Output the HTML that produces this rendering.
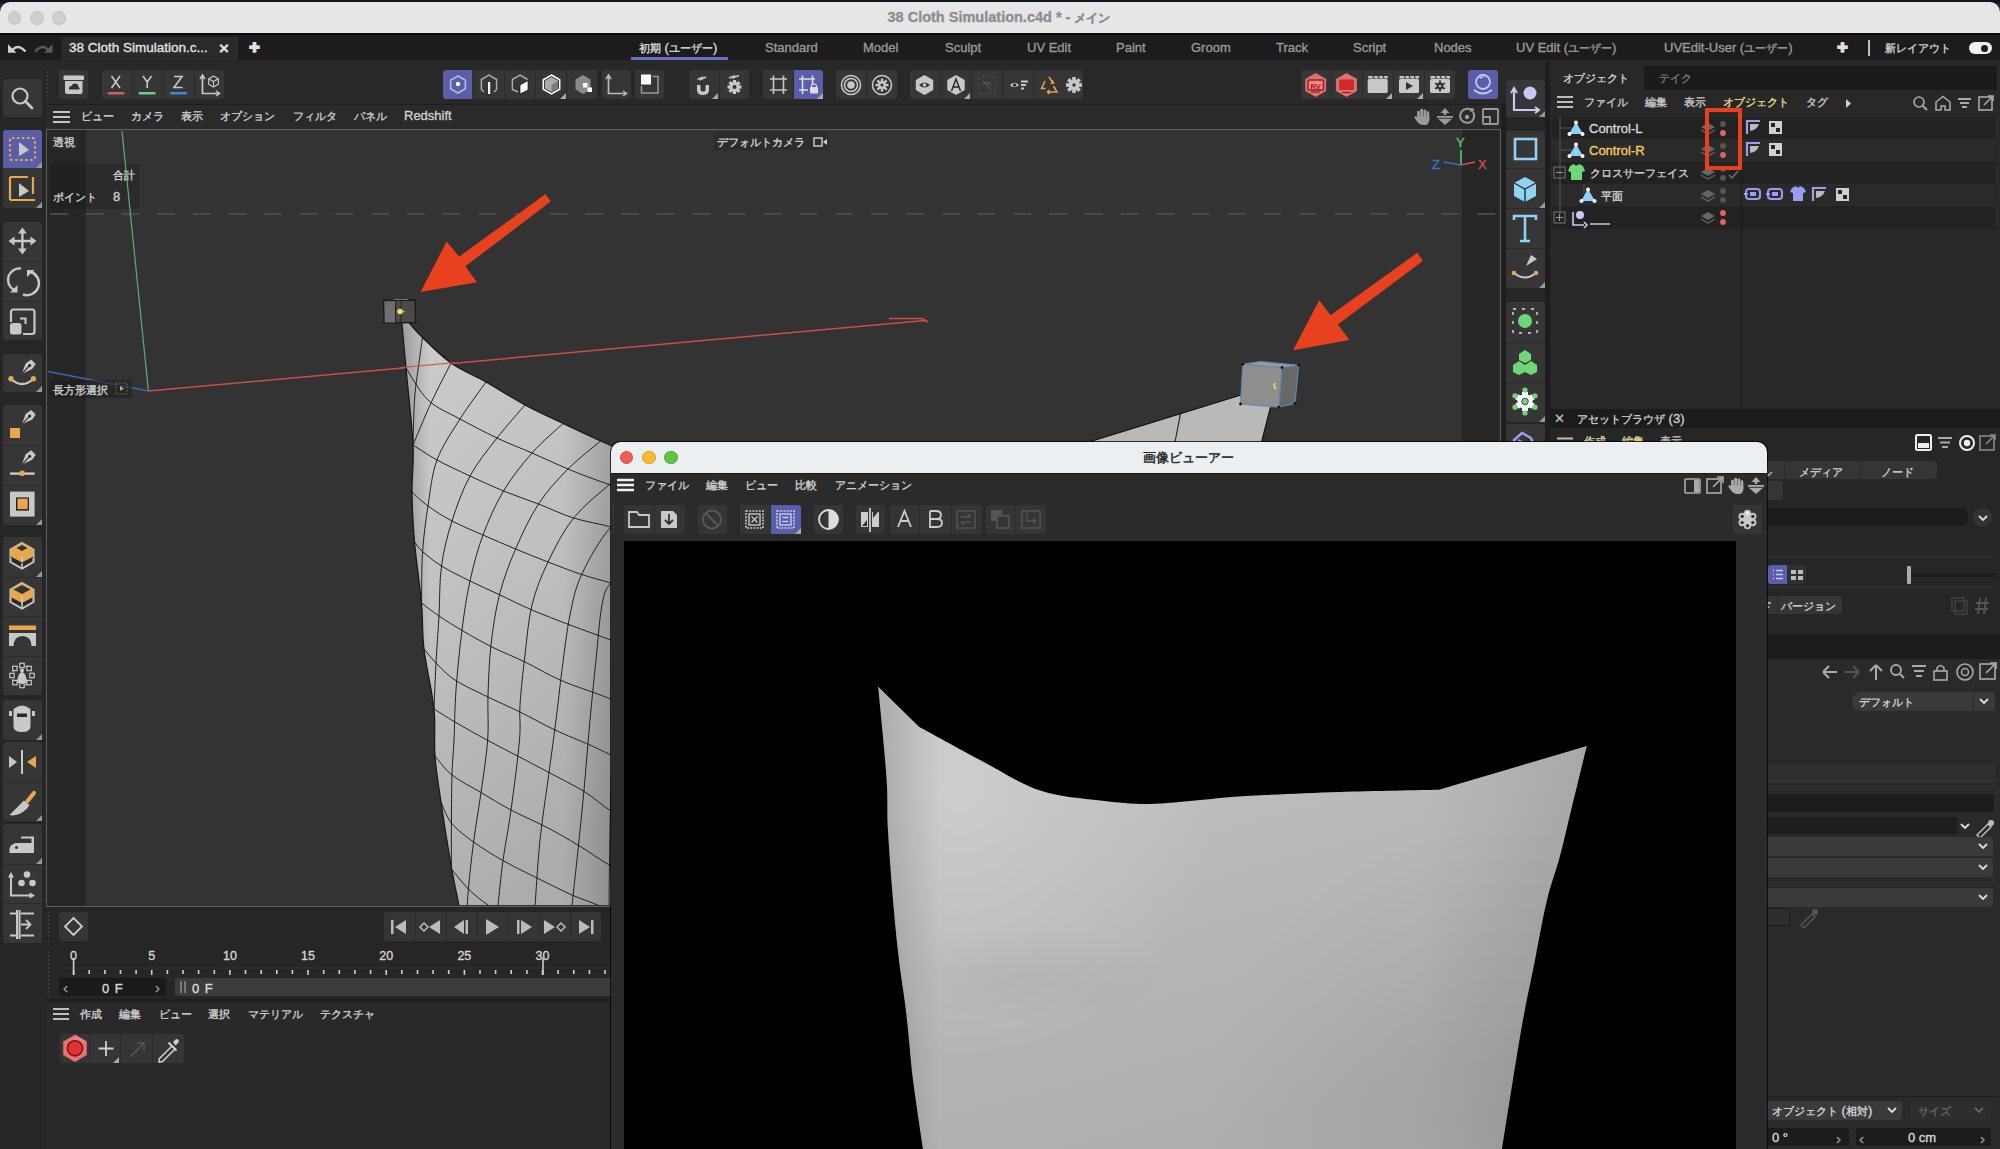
<!DOCTYPE html><html><head><meta charset="utf-8"><style>
*{margin:0;padding:0;box-sizing:border-box}
html,body{width:2000px;height:1149px;overflow:hidden;background:#262626;font-family:"Liberation Sans",sans-serif}
.a{position:absolute}
.t{position:absolute;white-space:nowrap;font-family:"Liberation Sans",sans-serif}
.btn{position:absolute;background:#353535}
svg{position:absolute;overflow:visible}
</style></head><body><div style="position:absolute;left:0px;top:0px;width:2000px;height:3px;background:#14141c;"></div><div style="position:absolute;left:0px;top:2px;width:2000px;height:32px;background:#e6e6e8;border-radius:10px 10px 0 0;"></div><div class="a" style="left:7.7px;top:11.2px;width:13.6px;height:13.6px;border-radius:50%;background:#cfcfd1;border:0.5px solid #c2c2c4"></div><div class="a" style="left:30.2px;top:11.2px;width:13.6px;height:13.6px;border-radius:50%;background:#cfcfd1;border:0.5px solid #c2c2c4"></div><div class="a" style="left:52.2px;top:11.2px;width:13.6px;height:13.6px;border-radius:50%;background:#cfcfd1;border:0.5px solid #c2c2c4"></div><div style="position:absolute;left:879px;top:8px;font-size:14.5px;line-height:18.5px;color:#8e8e90;font-weight:bold;white-space:nowrap;-webkit-text-stroke:0.35px #8e8e90;width:240px;text-align:center;letter-spacing:0px">38 Cloth Simulation.c4d * - <span style="font-size:12.18px">メイン</span></div><div style="position:absolute;left:0px;top:33px;width:2000px;height:2px;background:#0a0a0a;"></div><div style="position:absolute;left:0px;top:35px;width:2000px;height:25px;background:#1c1c1c;"></div><div style="position:absolute;left:61px;top:37px;width:177px;height:23px;background:#2a2a2a;"></div><svg style="left:0;top:0" width="80" height="60"><path d="M8 44.3 V52.8 H16.5Z" fill="#cfcfcf"/><path d="M12.5 49.8 Q18.5 43.5 25.5 51.5" stroke="#cfcfcf" stroke-width="2.4" fill="none"/><path d="M52.5 44.3 V52.8 H44Z" fill="#5a5a5a"/><path d="M48 49.8 Q42 43.5 35 51.5" stroke="#5a5a5a" stroke-width="2.4" fill="none"/></svg><div style="position:absolute;left:69px;top:39px;font-size:13.5px;line-height:17.5px;color:#e2e2e2;font-weight:normal;white-space:nowrap;-webkit-text-stroke:0.35px #e2e2e2;">38 Cloth Simulation.c...</div><div style="position:absolute;left:219px;top:38px;font-size:17px;line-height:21px;color:#e0e0e0;font-weight:bold;white-space:nowrap;-webkit-text-stroke:0.35px #e0e0e0;">×</div><div style="position:absolute;left:249px;top:40px;font-size:12.5px;line-height:16.5px;color:#e0e0e0;font-weight:bold;white-space:nowrap;-webkit-text-stroke:0.35px #e0e0e0;">✚</div><div style="position:absolute;left:639px;top:39px;font-size:13px;line-height:17px;color:#dadada;font-weight:normal;white-space:nowrap;-webkit-text-stroke:0.35px #dadada;"><span style="font-size:10.92px">初期</span> (<span style="font-size:10.92px">ユーザー</span>)</div><div style="position:absolute;left:765px;top:39px;font-size:13px;line-height:17px;color:#9a9a9a;font-weight:normal;white-space:nowrap;-webkit-text-stroke:0.35px #9a9a9a;">Standard</div><div style="position:absolute;left:863px;top:39px;font-size:13px;line-height:17px;color:#9a9a9a;font-weight:normal;white-space:nowrap;-webkit-text-stroke:0.35px #9a9a9a;">Model</div><div style="position:absolute;left:945px;top:39px;font-size:13px;line-height:17px;color:#9a9a9a;font-weight:normal;white-space:nowrap;-webkit-text-stroke:0.35px #9a9a9a;">Sculpt</div><div style="position:absolute;left:1027px;top:39px;font-size:13px;line-height:17px;color:#9a9a9a;font-weight:normal;white-space:nowrap;-webkit-text-stroke:0.35px #9a9a9a;">UV Edit</div><div style="position:absolute;left:1116px;top:39px;font-size:13px;line-height:17px;color:#9a9a9a;font-weight:normal;white-space:nowrap;-webkit-text-stroke:0.35px #9a9a9a;">Paint</div><div style="position:absolute;left:1191px;top:39px;font-size:13px;line-height:17px;color:#9a9a9a;font-weight:normal;white-space:nowrap;-webkit-text-stroke:0.35px #9a9a9a;">Groom</div><div style="position:absolute;left:1276px;top:39px;font-size:13px;line-height:17px;color:#9a9a9a;font-weight:normal;white-space:nowrap;-webkit-text-stroke:0.35px #9a9a9a;">Track</div><div style="position:absolute;left:1353px;top:39px;font-size:13px;line-height:17px;color:#9a9a9a;font-weight:normal;white-space:nowrap;-webkit-text-stroke:0.35px #9a9a9a;">Script</div><div style="position:absolute;left:1434px;top:39px;font-size:13px;line-height:17px;color:#9a9a9a;font-weight:normal;white-space:nowrap;-webkit-text-stroke:0.35px #9a9a9a;">Nodes</div><div style="position:absolute;left:1516px;top:39px;font-size:13px;line-height:17px;color:#9a9a9a;font-weight:normal;white-space:nowrap;-webkit-text-stroke:0.35px #9a9a9a;">UV Edit (<span style="font-size:10.92px">ユーザー</span>)</div><div style="position:absolute;left:1664px;top:39px;font-size:13px;line-height:17px;color:#9a9a9a;font-weight:normal;white-space:nowrap;-webkit-text-stroke:0.35px #9a9a9a;">UVEdit-User (<span style="font-size:10.92px">ユーザー</span>)</div><div style="position:absolute;left:1885px;top:39px;font-size:13px;line-height:17px;color:#d0d0d0;font-weight:normal;white-space:nowrap;-webkit-text-stroke:0.35px #d0d0d0;"><span style="font-size:10.92px">新レイアウト</span></div><div style="position:absolute;left:631px;top:57px;width:97px;height:3px;background:#6a6ec4;"></div><div style="position:absolute;left:1837px;top:40px;font-size:12.5px;line-height:16.5px;color:#e0e0e0;font-weight:bold;white-space:nowrap;-webkit-text-stroke:0.35px #e0e0e0;">✚</div><div style="position:absolute;left:1868px;top:40px;width:2px;height:16px;background:#bdbdbd;"></div><div class="a" style="left:1969px;top:42px;width:23px;height:12px;border-radius:6px;background:#f0f0f0"></div><div class="a" style="left:1981px;top:45px;width:7px;height:7px;border-radius:50%;background:#1c1c1c"></div><div style="position:absolute;left:0px;top:60px;width:2000px;height:44px;background:#282828;"></div><div class="a" style="left:3px;top:66px;width:38px;height:2px;background-image:radial-gradient(#444 0.8px,transparent 0.9px);background-size:4px 2px"></div><div class="a" style="left:46px;top:70px;width:3px;height:30px;background-image:radial-gradient(#444 0.8px,transparent 0.9px);background-size:3px 4px"></div><div class="a" style="left:1508px;top:66px;width:38px;height:2px;background-image:radial-gradient(#444 0.8px,transparent 0.9px);background-size:4px 2px"></div><div style="position:absolute;left:59px;top:70px;width:29px;height:29px;background:#363636;border-radius:3px;"></div><div style="position:absolute;left:102px;top:70px;width:122px;height:29px;background:#363636;border-radius:3px;"></div><div style="position:absolute;left:443px;top:70px;width:154px;height:29px;background:#363636;border-radius:3px;"></div><div style="position:absolute;left:602px;top:70px;width:29px;height:29px;background:#363636;border-radius:3px;"></div><div style="position:absolute;left:635px;top:70px;width:29px;height:29px;background:#363636;border-radius:3px;"></div><div style="position:absolute;left:689px;top:70px;width:60px;height:29px;background:#363636;border-radius:3px;"></div><div style="position:absolute;left:763px;top:70px;width:60px;height:29px;background:#363636;border-radius:3px;"></div><div style="position:absolute;left:836px;top:70px;width:61px;height:29px;background:#363636;border-radius:3px;"></div><div style="position:absolute;left:910px;top:70px;width:173px;height:29px;background:#363636;border-radius:3px;"></div><div style="position:absolute;left:1301px;top:70px;width:154px;height:29px;background:#363636;border-radius:3px;"></div><div style="position:absolute;left:443px;top:70px;width:29px;height:29px;background:#5a5ea8;border-radius:3px 0 0 3px;"></div><div style="position:absolute;left:793px;top:70px;width:30px;height:29px;background:#5a5ea8;border-radius:0 3px 3px 0;"></div><div style="position:absolute;left:1468px;top:70px;width:30px;height:29px;background:#5a5ea8;border-radius:3px;"></div><div style="position:absolute;left:132px;top:70px;width:1px;height:29px;background:#2a2a2a;"></div><div style="position:absolute;left:163px;top:70px;width:1px;height:29px;background:#2a2a2a;"></div><div style="position:absolute;left:194px;top:70px;width:1px;height:29px;background:#2a2a2a;"></div><div style="position:absolute;left:473px;top:70px;width:1px;height:29px;background:#2a2a2a;"></div><div style="position:absolute;left:504px;top:70px;width:1px;height:29px;background:#2a2a2a;"></div><div style="position:absolute;left:535px;top:70px;width:1px;height:29px;background:#2a2a2a;"></div><div style="position:absolute;left:566px;top:70px;width:1px;height:29px;background:#2a2a2a;"></div><div style="position:absolute;left:719px;top:70px;width:1px;height:29px;background:#2a2a2a;"></div><div style="position:absolute;left:793px;top:70px;width:1px;height:29px;background:#2a2a2a;"></div><div style="position:absolute;left:866px;top:70px;width:1px;height:29px;background:#2a2a2a;"></div><div style="position:absolute;left:940px;top:70px;width:1px;height:29px;background:#2a2a2a;"></div><div style="position:absolute;left:971px;top:70px;width:1px;height:29px;background:#2a2a2a;"></div><div style="position:absolute;left:1002px;top:70px;width:1px;height:29px;background:#2a2a2a;"></div><div style="position:absolute;left:1033px;top:70px;width:1px;height:29px;background:#2a2a2a;"></div><div style="position:absolute;left:1331px;top:70px;width:1px;height:29px;background:#2a2a2a;"></div><div style="position:absolute;left:1362px;top:70px;width:1px;height:29px;background:#2a2a2a;"></div><div style="position:absolute;left:1393px;top:70px;width:1px;height:29px;background:#2a2a2a;"></div><div style="position:absolute;left:1424px;top:70px;width:1px;height:29px;background:#2a2a2a;"></div><svg style="left:0;top:0" width="2000" height="110"><rect x="63.5" y="75.5" width="20.5" height="4.5" rx="1" fill="#c8c8c8"/><path d="M65 81 H82.5 V92 Q82.5 94 80.5 94 H67 Q65 94 65 92Z" fill="#c8c8c8"/><path d="M69 89.5 Q68.5 86 71.5 86 Q72.5 83 75.5 83.5 Q78.5 84 78.5 87 Q80 87.5 79.5 89.5Z" fill="#333"/><path d="M111.5 76 L120 88 M120 76 L111.5 88" stroke="#c8c8c8" stroke-width="1.6"/><rect x="107.5" y="92" width="17" height="2.5" rx="1" fill="#d0605c"/><path d="M143 76 L147.2 82 L151.5 76 M147.2 82 V88" stroke="#c8c8c8" stroke-width="1.6" fill="none"/><rect x="138.7" y="92" width="17" height="2.5" rx="1" fill="#6fcf72"/><path d="M174 76.5 H182 L174 87.5 H182.5" stroke="#c8c8c8" stroke-width="1.6" fill="none"/><rect x="170" y="92" width="17" height="2.5" rx="1" fill="#3f87d8"/><path d="M202.5 76 V93.5 H219" stroke="#c8c8c8" stroke-width="1.7" fill="none"/><path d="M200 79 L202.5 75 L205 79 M216 91 L219.5 93.5 L216 96" stroke="#c8c8c8" stroke-width="1.5" fill="none"/><polygon points="213.5,76.0 218.3,78.8 218.3,84.2 213.5,87.0 208.7,84.2 208.7,78.8" stroke="#c8c8c8" stroke-width="1.2" fill="none"/><path d="M208.7 78.7 L213.5 81.5 L218.3 78.7 M213.5 81.5 V87" stroke="#c8c8c8" stroke-width="1.1" fill="none"/><polygon points="458.0,76.0 465.4,80.2 465.4,88.8 458.0,93.0 450.6,88.8 450.6,80.2" stroke="#b8b8e0" stroke-width="1.6" fill="none"/><circle cx="458" cy="84" r="2.2" fill="#fff"/><path d="M484 92 L481.4 89.5 V79.5 L489 75 L496.6 79.5 V89.5 L494 92" stroke="#aaa" stroke-width="1.5" fill="none"/><rect x="488" y="82" width="2.2" height="12" fill="#fff"/><path d="M518 92 L512.4 89.5 V79.5 L520 75 L527.6 79.5" stroke="#aaa" stroke-width="1.5" fill="none"/><path d="M520 85 L528 80.5 V90 L520 94Z" fill="#fff" stroke="#111" stroke-width="0.7"/><polygon points="551.5,75.0 559.7,79.8 559.7,89.2 551.5,94.0 543.3,89.2 543.3,79.8" stroke="#fff" stroke-width="1.5" fill="none"/><polygon points="551.5,77.0 558.0,80.8 558.0,88.2 551.5,92.0 545.0,88.2 545.0,80.8" fill="#aaa"/><path d="M551.5 85 L558 81 V89 L551.5 92.5Z" fill="#7a7a7a"/><path d="M583 75 L590.5 79.5 V89.5 L583 94 L575.5 89.5 V79.5Z" fill="#8a8a8a"/><rect x="583" y="83" width="4.5" height="4.5" fill="#fff"/><rect x="587.5" y="87.5" width="4.5" height="4.5" fill="#fff"/><path d="M608.5 76 V93.5 H626" stroke="#bbb" stroke-width="1.7" fill="none"/><path d="M606 79 L608.5 75 L611 79 M623 91 L626.5 93.5 L623 96" stroke="#bbb" stroke-width="1.5" fill="none"/><rect x="641" y="74.5" width="10" height="10" fill="#fff"/><path d="M652.5 76.5 H658 V93 H641.5 V86" stroke="#999" stroke-width="1.5" fill="none"/><path d="M697 85 V90 Q697 95 703 95 Q709 95 709 90 V85 H705.5 V90 Q705.5 91.5 703 91.5 Q700.5 91.5 700.5 90 V85Z" fill="#c8c8c8"/><path d="M697.5 79.5 L702 77.5 L701 79.5 L706 77" stroke="#c8c8c8" stroke-width="1.4" fill="none"/><circle cx="734.5" cy="87" r="5" fill="#c8c8c8"/><rect x="732.9" y="80.0" width="3.2" height="3.5" fill="#c8c8c8" transform="rotate(0 734.5 87)"/><rect x="732.9" y="80.0" width="3.2" height="3.5" fill="#c8c8c8" transform="rotate(45 734.5 87)"/><rect x="732.9" y="80.0" width="3.2" height="3.5" fill="#c8c8c8" transform="rotate(90 734.5 87)"/><rect x="732.9" y="80.0" width="3.2" height="3.5" fill="#c8c8c8" transform="rotate(135 734.5 87)"/><rect x="732.9" y="80.0" width="3.2" height="3.5" fill="#c8c8c8" transform="rotate(180 734.5 87)"/><rect x="732.9" y="80.0" width="3.2" height="3.5" fill="#c8c8c8" transform="rotate(225 734.5 87)"/><rect x="732.9" y="80.0" width="3.2" height="3.5" fill="#c8c8c8" transform="rotate(270 734.5 87)"/><rect x="732.9" y="80.0" width="3.2" height="3.5" fill="#c8c8c8" transform="rotate(315 734.5 87)"/><circle cx="734.5" cy="87" r="2" fill="#333"/><path d="M729 78 L734 76 L733 78 L739 75.5" stroke="#c8c8c8" stroke-width="1.4" fill="none"/><path d="M770 79 H787 M770 90 H787 M773.5 75.5 V94 M783.5 75.5 V94" stroke="#c8c8c8" stroke-width="1.6"/><path d="M799 79 H815 M799 90 H808 M802.5 75.5 V94 M812.5 75.5 V85" stroke="#ddd" stroke-width="1.6"/><rect x="810" y="87" width="8" height="6.5" rx="1" fill="#ddd"/><path d="M811.5 87 V85.5 Q814 82 816.5 85.5 V87" stroke="#ddd" stroke-width="1.2" fill="none"/><circle cx="851" cy="85" r="9.5" stroke="#c8c8c8" stroke-width="1.6" fill="none"/><circle cx="851" cy="85" r="6.5" stroke="#c8c8c8" stroke-width="1.5" fill="none"/><circle cx="851" cy="85" r="3.8" fill="#c8c8c8"/><circle cx="882" cy="85" r="9.5" stroke="#c8c8c8" stroke-width="1.6" fill="none"/><circle cx="882" cy="85" r="4" fill="#c8c8c8"/><rect x="880.8" y="78.5" width="2.4" height="3" fill="#c8c8c8" transform="rotate(0 882 85)"/><rect x="880.8" y="78.5" width="2.4" height="3" fill="#c8c8c8" transform="rotate(45 882 85)"/><rect x="880.8" y="78.5" width="2.4" height="3" fill="#c8c8c8" transform="rotate(90 882 85)"/><rect x="880.8" y="78.5" width="2.4" height="3" fill="#c8c8c8" transform="rotate(135 882 85)"/><rect x="880.8" y="78.5" width="2.4" height="3" fill="#c8c8c8" transform="rotate(180 882 85)"/><rect x="880.8" y="78.5" width="2.4" height="3" fill="#c8c8c8" transform="rotate(225 882 85)"/><rect x="880.8" y="78.5" width="2.4" height="3" fill="#c8c8c8" transform="rotate(270 882 85)"/><rect x="880.8" y="78.5" width="2.4" height="3" fill="#c8c8c8" transform="rotate(315 882 85)"/><circle cx="882" cy="85" r="1.6" fill="#333"/><polygon points="924.5,75.0 933.2,80.0 933.2,90.0 924.5,95.0 915.8,90.0 915.8,80.0" fill="#c8c8c8"/><path d="M919 85 Q924.5 80 930 85 Q924.5 90 919 85Z" fill="#333"/><circle cx="924.5" cy="85" r="1.8" fill="#c8c8c8"/><polygon points="956.0,75.0 964.7,80.0 964.7,90.0 956.0,95.0 947.3,90.0 947.3,80.0" fill="#c8c8c8"/><path d="M951.5 91 L956 79 L960.5 91 M953 87 H959" stroke="#222" stroke-width="1.4" fill="none"/><rect x="978.5" y="76.5" width="17" height="17" stroke="#555" stroke-width="1.3" fill="none" stroke-dasharray="1.3 3"/><path d="M982.5 85 Q987 80.5 991.5 85 M983 81 L991 89" stroke="#555" stroke-width="1.2" fill="none"/><path d="M1010 85 Q1014 80.5 1019 85 Q1014 89.5 1010 85Z" fill="#c8c8c8"/><circle cx="1014.5" cy="85" r="1.8" fill="#333"/><path d="M1021 81.5 H1028 M1021 85 H1026 M1021 88.5 H1024" stroke="#c8c8c8" stroke-width="1.8"/><path d="M1049 77 L1053 83 M1052 80.5 L1053.5 83 L1050.5 83.5 M1045 81 L1041.5 88.5 H1045.5 M1048 92 H1057 L1053.5 86 M1049.5 90 L1047.5 92 L1049.5 94" stroke="#e4a04a" stroke-width="1.6" fill="none"/><circle cx="1074" cy="85" r="5.5" fill="#c8c8c8"/><rect x="1072.2" y="77" width="3.6" height="3.8" fill="#c8c8c8" transform="rotate(0 1074 85)"/><rect x="1072.2" y="77" width="3.6" height="3.8" fill="#c8c8c8" transform="rotate(45 1074 85)"/><rect x="1072.2" y="77" width="3.6" height="3.8" fill="#c8c8c8" transform="rotate(90 1074 85)"/><rect x="1072.2" y="77" width="3.6" height="3.8" fill="#c8c8c8" transform="rotate(135 1074 85)"/><rect x="1072.2" y="77" width="3.6" height="3.8" fill="#c8c8c8" transform="rotate(180 1074 85)"/><rect x="1072.2" y="77" width="3.6" height="3.8" fill="#c8c8c8" transform="rotate(225 1074 85)"/><rect x="1072.2" y="77" width="3.6" height="3.8" fill="#c8c8c8" transform="rotate(270 1074 85)"/><rect x="1072.2" y="77" width="3.6" height="3.8" fill="#c8c8c8" transform="rotate(315 1074 85)"/><circle cx="1074" cy="85" r="1.7" fill="#333"/><polygon points="1315.7,73.0 1326.1,79.0 1326.1,91.0 1315.7,97.0 1305.3,91.0 1305.3,79.0" fill="#e07272"/><rect x="1308" y="80" width="15.5" height="10" rx="1" stroke="#a01818" stroke-width="1.4" fill="#e88"/><path d="M1311 92 H1320" stroke="#a01818" stroke-width="1.2"/><text x="1315.7" y="88.5" font-size="7.5" font-weight="bold" fill="#a01818" text-anchor="middle" font-family="Liberation Sans">RV</text><polygon points="1346.5,73.0 1356.9,79.0 1356.9,91.0 1346.5,97.0 1336.1,91.0 1336.1,79.0" fill="#e07272"/><rect x="1339" y="79.5" width="15" height="10.5" rx="1" fill="#d02a2a"/><path d="M1342 92.5 H1351" stroke="#a01818" stroke-width="1.2"/><rect x="1367.7" y="79" width="20" height="14" rx="1.5" fill="#c8c8c8"/><path d="M1368.2 76 H1387.7 V78.5 H1368.2Z" fill="#c8c8c8"/><path d="M1372.7 75.5 L1374.2 78.5 M1377.7 75.5 L1379.2 78.5 M1382.7 75.5 L1384.2 78.5" stroke="#333" stroke-width="1.1"/><rect x="1399" y="79" width="20" height="14" rx="1.5" fill="#c8c8c8"/><path d="M1399.5 76 H1419 V78.5 H1399.5Z" fill="#c8c8c8"/><path d="M1404 75.5 L1405.5 78.5 M1409 75.5 L1410.5 78.5 M1414 75.5 L1415.5 78.5" stroke="#333" stroke-width="1.1"/><path d="M1406 82 L1413 86 L1406 90Z" fill="#333"/><rect x="1430" y="79" width="20" height="14" rx="1.5" fill="#c8c8c8"/><path d="M1430.5 76 H1450 V78.5 H1430.5Z" fill="#c8c8c8"/><path d="M1435 75.5 L1436.5 78.5 M1440 75.5 L1441.5 78.5 M1445 75.5 L1446.5 78.5" stroke="#333" stroke-width="1.1"/><circle cx="1440" cy="86" r="3.4" fill="#333"/><rect x="1439" y="80.5" width="2" height="2.5" fill="#333" transform="rotate(0 1440 86)"/><rect x="1439" y="80.5" width="2" height="2.5" fill="#333" transform="rotate(60 1440 86)"/><rect x="1439" y="80.5" width="2" height="2.5" fill="#333" transform="rotate(120 1440 86)"/><rect x="1439" y="80.5" width="2" height="2.5" fill="#333" transform="rotate(180 1440 86)"/><rect x="1439" y="80.5" width="2" height="2.5" fill="#333" transform="rotate(240 1440 86)"/><rect x="1439" y="80.5" width="2" height="2.5" fill="#333" transform="rotate(300 1440 86)"/><circle cx="1440" cy="86" r="1.2" fill="#c8c8c8"/><circle cx="1483" cy="82" r="7" stroke="#c8c8f4" stroke-width="1.8" fill="none"/><path d="M1480 78.5 Q1481.5 77 1483.5 77" stroke="#c8c8f4" stroke-width="1.4" fill="none"/><path d="M1474 90 Q1483 97 1492 90" stroke="#c8c8f4" stroke-width="1.8" fill="none"/></svg><svg style="left:560px;top:93px" width="6" height="6"><path d="M6 0 L6 6 L0 6Z" fill="#aaa"/></svg><svg style="left:712px;top:93px" width="6" height="6"><path d="M6 0 L6 6 L0 6Z" fill="#aaa"/></svg><svg style="left:817px;top:93px" width="6" height="6"><path d="M6 0 L6 6 L0 6Z" fill="#aaa"/></svg><svg style="left:964px;top:93px" width="6" height="6"><path d="M6 0 L6 6 L0 6Z" fill="#aaa"/></svg><svg style="left:1386px;top:93px" width="6" height="6"><path d="M6 0 L6 6 L0 6Z" fill="#aaa"/></svg><svg style="left:1417px;top:93px" width="6" height="6"><path d="M6 0 L6 6 L0 6Z" fill="#aaa"/></svg><div style="position:absolute;left:3px;top:79px;width:39px;height:38px;background:#363636;border-radius:3px;"></div><div style="position:absolute;left:3px;top:130px;width:39px;height:78px;background:#363636;border-radius:3px;"></div><div style="position:absolute;left:3px;top:222px;width:39px;height:118px;background:#363636;border-radius:3px;"></div><div style="position:absolute;left:3px;top:354px;width:39px;height:38px;background:#363636;border-radius:3px;"></div><div style="position:absolute;left:3px;top:405px;width:39px;height:120px;background:#363636;border-radius:3px;"></div><div style="position:absolute;left:3px;top:537px;width:39px;height:158px;background:#363636;border-radius:3px;"></div><div style="position:absolute;left:3px;top:700px;width:39px;height:40px;background:#363636;border-radius:3px;"></div><div style="position:absolute;left:3px;top:742px;width:39px;height:79px;background:#363636;border-radius:3px;"></div><div style="position:absolute;left:3px;top:824px;width:39px;height:119px;background:#363636;border-radius:3px;"></div><div style="position:absolute;left:3px;top:130px;width:39px;height:38px;background:#5a5ea8;border-radius:3px 3px 0 0;"></div><div style="position:absolute;left:3px;top:261px;width:39px;height:1px;background:#2a2a2a;"></div><div style="position:absolute;left:3px;top:301px;width:39px;height:1px;background:#2a2a2a;"></div><div style="position:absolute;left:3px;top:445px;width:39px;height:1px;background:#2a2a2a;"></div><div style="position:absolute;left:3px;top:485px;width:39px;height:1px;background:#2a2a2a;"></div><div style="position:absolute;left:3px;top:577px;width:39px;height:1px;background:#2a2a2a;"></div><div style="position:absolute;left:3px;top:616px;width:39px;height:1px;background:#2a2a2a;"></div><div style="position:absolute;left:3px;top:656px;width:39px;height:1px;background:#2a2a2a;"></div><div style="position:absolute;left:3px;top:782px;width:39px;height:1px;background:#2a2a2a;"></div><div style="position:absolute;left:3px;top:864px;width:39px;height:1px;background:#2a2a2a;"></div><div style="position:absolute;left:3px;top:903px;width:39px;height:1px;background:#2a2a2a;"></div><svg style="left:36px;top:162px" width="6" height="6"><path d="M6 0 L6 6 L0 6Z" fill="#9a9a9a"/></svg><svg style="left:36px;top:202px" width="6" height="6"><path d="M6 0 L6 6 L0 6Z" fill="#9a9a9a"/></svg><svg style="left:36px;top:386px" width="6" height="6"><path d="M6 0 L6 6 L0 6Z" fill="#9a9a9a"/></svg><svg style="left:36px;top:519px" width="6" height="6"><path d="M6 0 L6 6 L0 6Z" fill="#9a9a9a"/></svg><svg style="left:36px;top:571px" width="6" height="6"><path d="M6 0 L6 6 L0 6Z" fill="#9a9a9a"/></svg><svg style="left:36px;top:734px" width="6" height="6"><path d="M6 0 L6 6 L0 6Z" fill="#9a9a9a"/></svg><svg style="left:36px;top:815px" width="6" height="6"><path d="M6 0 L6 6 L0 6Z" fill="#9a9a9a"/></svg><svg style="left:36px;top:858px" width="6" height="6"><path d="M6 0 L6 6 L0 6Z" fill="#9a9a9a"/></svg><svg style="left:0;top:0" width="50" height="960"><circle cx="20" cy="96" r="7.5" stroke="#c8c8c8" stroke-width="2.2" fill="none"/><path d="M25.5 101.5 L32 108" stroke="#c8c8c8" stroke-width="2.8" stroke-linecap="round"/><rect x="10" y="138" width="25" height="22" rx="2" stroke="#e8a64e" stroke-width="2.2" fill="none" stroke-dasharray="2.5 2.5"/><path d="M19 142 L29 150 L19 156Z" fill="#c8c8c8"/><path d="M10 177 H28 M10 200 H35 M10 177 V200 M33 177 V194" stroke="#e8a64e" stroke-width="2.2" fill="none"/><path d="M19 183 L29 191 L19 197Z" fill="#c8c8c8"/><path d="M22.4 231 V251 M12 241 H33" stroke="#c8c8c8" stroke-width="2.4"/><path d="M18 233.5 L22.4 227.5 L26.8 233.5Z M18 248.5 L22.4 254.5 L26.8 248.5Z M14.5 236.5 L8.5 241 L14.5 245.5Z M30.5 236.5 L36.5 241 L30.5 245.5Z" fill="#c8c8c8"/><path d="M21 268.5 A11.5 11.5 0 0 0 14 290" stroke="#c8c8c8" stroke-width="2.4" fill="none"/><path d="M10 292.5 L17.5 292.5 L17.5 285Z" fill="#c8c8c8"/><path d="M23 294.5 A11.5 11.5 0 0 0 31 272" stroke="#c8c8c8" stroke-width="2.4" fill="none"/><path d="M34.5 270 L27 270 L27 277Z" fill="#c8c8c8"/><path d="M11 322 V312 Q11 309.5 13.5 309.5 H32 Q34.5 309.5 34.5 312 V331.5 Q34.5 334 32 334 H23" stroke="#c8c8c8" stroke-width="2.2" fill="none"/><rect x="10" y="323" width="11.5" height="11.5" rx="2.5" fill="#c8c8c8"/><path d="M20 318.5 H25.5 V324" stroke="#c8c8c8" stroke-width="2" fill="none"/><path d="M11 379 Q22 389 33.5 379" stroke="#c8c8c8" stroke-width="2.2" fill="none"/><circle cx="11" cy="378.8" r="2.7" fill="#e8a64e"/><circle cx="33.4" cy="378.8" r="2.7" fill="#e8a64e"/><path d="M21.7 374 L25.7 363.5 L31.2 359.5 L35.7 364 L32.2 369Z" fill="#c8c8c8"/><path d="M22.2 373.5 L29.2 366" stroke="#222" stroke-width="1.1"/><circle cx="29.7" cy="365.5" r="1.5" fill="#222"/><rect x="10" y="428" width="10" height="10" fill="#e8a64e"/><path d="M21.7 424.6 L25.7 414.1 L31.2 410.1 L35.7 414.6 L32.2 419.6Z" fill="#c8c8c8"/><path d="M22.2 424.1 L29.2 416.6" stroke="#222" stroke-width="1.1"/><circle cx="29.7" cy="416.1" r="1.5" fill="#222"/><path d="M10 473.6 H34.6" stroke="#c8c8c8" stroke-width="2.4"/><circle cx="22.2" cy="473.3" r="2.8" fill="#e8a64e"/><path d="M21.7 464.8 L25.7 454.3 L31.2 450.3 L35.7 454.8 L32.2 459.8Z" fill="#c8c8c8"/><path d="M22.2 464.3 L29.2 456.8" stroke="#222" stroke-width="1.1"/><circle cx="29.7" cy="456.3" r="1.5" fill="#222"/><rect x="10" y="491.6" width="24.6" height="25" fill="#c8c8c8"/><rect x="16" y="497.4" width="13" height="13.2" fill="#222"/><rect x="17.4" y="498.6" width="10.3" height="10.5" fill="#e8a64e"/><path d="M22 543 L33.5 549.5 V562 L22 568.5 L10.5 562 V549.5Z" stroke="#c8c8c8" stroke-width="2" fill="#2a2a2a"/><path d="M10.5 549.5 L22 543 L33.5 549.5 V557 L22 563 L10.5 557Z" fill="#e8a64e"/><path d="M16.5 548 L22 545 L27.5 548 L22 551Z" fill="#333"/><path d="M22 556 V568" stroke="#c8c8c8" stroke-width="1.6"/><path d="M10.5 557 L22 563 L33.5 557" stroke="#222" stroke-width="1" fill="none"/><path d="M22 583 L33.5 589.5 V602 L22 608.5 L10.5 602 V589.5Z" stroke="#c8c8c8" stroke-width="2" fill="#2a2a2a"/><path d="M10.5 589.5 L22 583 L33.5 589.5 V597 L22 603 L10.5 597Z" fill="#e8a64e"/><path d="M13.5 589.5 L22 585 L30.5 589.5 L22 594Z" fill="#333"/><path d="M22 596 V608" stroke="#c8c8c8" stroke-width="1.6"/><rect x="9" y="625.5" width="27" height="4.5" fill="#e8a64e"/><path d="M9 633 H36 V646 H31.5 Q31 636 22.5 636 Q14 636 13.5 646 H9Z" fill="#c8c8c8"/><circle cx="22" cy="675.5" r="10" stroke="#c8c8c8" stroke-width="1.2" fill="none" stroke-dasharray="2.5 2.5"/><rect x="29.8" y="673.3" width="4.4" height="4.4" stroke="#c8c8c8" stroke-width="1.2" fill="#333"/><rect x="26.9" y="680.4" width="4.4" height="4.4" stroke="#c8c8c8" stroke-width="1.2" fill="#333"/><rect x="19.8" y="683.3" width="4.4" height="4.4" stroke="#c8c8c8" stroke-width="1.2" fill="#333"/><rect x="12.7" y="680.4" width="4.4" height="4.4" stroke="#c8c8c8" stroke-width="1.2" fill="#333"/><rect x="9.8" y="673.3" width="4.4" height="4.4" stroke="#c8c8c8" stroke-width="1.2" fill="#333"/><rect x="12.7" y="666.2" width="4.4" height="4.4" stroke="#c8c8c8" stroke-width="1.2" fill="#333"/><rect x="19.8" y="663.3" width="4.4" height="4.4" stroke="#c8c8c8" stroke-width="1.2" fill="#333"/><rect x="26.9" y="666.2" width="4.4" height="4.4" stroke="#c8c8c8" stroke-width="1.2" fill="#333"/><path d="M17 683 Q17.5 673 22 672 Q26.5 673 27 683Z" fill="#c8c8c8"/><circle cx="22" cy="670.5" r="2" fill="#c8c8c8"/><path d="M13.5 709 Q22 702 30.5 709 V726 Q30.5 732 22 732 Q13.5 732 13.5 726Z" fill="#c8c8c8"/><rect x="17" y="713.5" width="10" height="3.5" fill="#2a2a2a"/><rect x="9" y="711" width="3" height="5" fill="#c8c8c8"/><rect x="32" y="711" width="3" height="5" fill="#c8c8c8"/><path d="M22 750 V774" stroke="#c8c8c8" stroke-width="2"/><path d="M9 756 L17 762 L9 768Z" fill="#c8c8c8"/><path d="M36 756 L27 762 L36 768Z" fill="#e8a64e"/><path d="M9.5 815 L24 800.5 L29.5 805 L27 808.5 Q20 815.5 12 815.5Z" fill="#c8c8c8"/><path d="M27.5 801 L34 793" stroke="#e8a64e" stroke-width="4.2" stroke-linecap="round"/><path d="M9.5 853 V848.5 Q11 843 18 843 H31.5 V838.5 H21 V836.5 H34 V853Z" fill="#c8c8c8"/><circle cx="16.5" cy="847.5" r="1.5" fill="#333"/><path d="M11 874 V895.5 H33" stroke="#c8c8c8" stroke-width="2" fill="none"/><path d="M8 877.5 L11 872 L14 877.5Z M29.5 892.5 L35 895.5 L29.5 898.5Z" fill="#c8c8c8"/><circle cx="27" cy="874.5" r="3.3" fill="#c8c8c8"/><circle cx="21.5" cy="883" r="3.3" fill="#c8c8c8"/><circle cx="32.5" cy="883" r="3.3" fill="#c8c8c8"/><path d="M10 913.5 H16 M21 913.5 H34 M10 935.5 H16 M21 935.5 H34 M17 910 V939 M19.5 910 V939" stroke="#c8c8c8" stroke-width="2"/><path d="M21 924.5 H30 M26 920 L30.5 924.5 L26 929" stroke="#c8c8c8" stroke-width="1.8" fill="none"/></svg><div style="position:absolute;left:46px;top:104px;width:1455px;height:25px;background:#2a2a2a;"></div><div style="position:absolute;left:46px;top:104px;width:1455px;height:1px;background:#1e1e1e;"></div><svg style="left:0;top:0" width="80" height="130"><path d="M53 112 H70 M53 117 H70 M53 122 H70" stroke="#c4c4c4" stroke-width="2.2"/></svg><div style="position:absolute;left:81px;top:107px;font-size:13px;line-height:17px;color:#cfcfcf;font-weight:normal;white-space:nowrap;-webkit-text-stroke:0.35px #cfcfcf;"><span style="font-size:10.92px">ビュー</span></div><div style="position:absolute;left:131px;top:107px;font-size:13px;line-height:17px;color:#cfcfcf;font-weight:normal;white-space:nowrap;-webkit-text-stroke:0.35px #cfcfcf;"><span style="font-size:10.92px">カメラ</span></div><div style="position:absolute;left:181px;top:107px;font-size:13px;line-height:17px;color:#cfcfcf;font-weight:normal;white-space:nowrap;-webkit-text-stroke:0.35px #cfcfcf;"><span style="font-size:10.92px">表示</span></div><div style="position:absolute;left:220px;top:107px;font-size:13px;line-height:17px;color:#cfcfcf;font-weight:normal;white-space:nowrap;-webkit-text-stroke:0.35px #cfcfcf;"><span style="font-size:10.92px">オプション</span></div><div style="position:absolute;left:293px;top:107px;font-size:13px;line-height:17px;color:#cfcfcf;font-weight:normal;white-space:nowrap;-webkit-text-stroke:0.35px #cfcfcf;"><span style="font-size:10.92px">フィルタ</span></div><div style="position:absolute;left:354px;top:107px;font-size:13px;line-height:17px;color:#cfcfcf;font-weight:normal;white-space:nowrap;-webkit-text-stroke:0.35px #cfcfcf;"><span style="font-size:10.92px">パネル</span></div><div style="position:absolute;left:404px;top:107px;font-size:13px;line-height:17px;color:#cfcfcf;font-weight:normal;white-space:nowrap;-webkit-text-stroke:0.35px #cfcfcf;">Redshift</div><svg style="left:1410px;top:104px" width="92" height="25"><g transform="translate(4 4) scale(0.95)" fill="#9a9a9a"><rect x="3.2" y="3" width="3" height="10" rx="1.5"/><rect x="6.6" y="0.8" width="3" height="11" rx="1.5"/><rect x="10" y="1.5" width="3" height="11" rx="1.5"/><rect x="13.3" y="3.5" width="2.8" height="10" rx="1.4"/><path d="M3.2 9 H16.1 V12.5 Q16.1 18 10 18 Q6 18 3.5 14.5 L0.6 10.5 Q0 9.2 1.3 8.8 Q2.4 8.5 3.2 9.5Z"/></g><path d="M35 4 L39.5 9 H36.3 V11 H33.7 V9 H30.5Z" fill="#9a9a9a"/><rect x="27" y="12" width="16" height="1.8" fill="#9a9a9a"/><path d="M35 21 L42 14.8 H28Z" fill="#9a9a9a"/><path d="M61 6 A7 7 0 1 0 63 8" stroke="#9a9a9a" stroke-width="2" fill="none"/><circle cx="57" cy="13" r="2.2" fill="#9a9a9a"/><circle cx="62" cy="6" r="2" fill="#9a9a9a"/><rect x="73" y="5" width="15" height="15" stroke="#9a9a9a" stroke-width="1.8" fill="none" rx="1"/><path d="M73 13 H80 V20" stroke="#9a9a9a" stroke-width="1.8" fill="none"/></svg><div style="position:absolute;left:46px;top:129px;width:1455px;height:778px;background:#5f5f5f;"></div><div style="position:absolute;left:47px;top:130px;width:1453px;height:776px;background:#333333;"></div><div style="position:absolute;left:47px;top:130px;width:39px;height:776px;background:#262626;"></div><div style="position:absolute;left:1462px;top:130px;width:38px;height:776px;background:#262626;"></div><div class="a" style="left:50px;top:213px;width:1450px;height:2px;background-image:linear-gradient(90deg,#4a4a4a 18px,transparent 18px);background-size:35.7px 2px"></div><div style="position:absolute;left:50px;top:132px;width:28px;height:18px;background:#2a2a2a;border-radius:2px;"></div><div style="position:absolute;left:53px;top:133px;font-size:13px;line-height:17px;color:#d0d0d0;font-weight:normal;white-space:nowrap;-webkit-text-stroke:0.35px #d0d0d0;"><span style="font-size:10.92px">透視</span></div><div style="position:absolute;left:50px;top:164px;width:89px;height:45px;background:rgba(20,20,20,0.22);border-radius:2px;"></div><div style="position:absolute;left:113px;top:166px;font-size:13px;line-height:17px;color:#cfcfcf;font-weight:normal;white-space:nowrap;-webkit-text-stroke:0.35px #cfcfcf;"><span style="font-size:10.92px">合計</span></div><div style="position:absolute;left:53px;top:188px;font-size:13px;line-height:17px;color:#cfcfcf;font-weight:normal;white-space:nowrap;-webkit-text-stroke:0.35px #cfcfcf;"><span style="font-size:10.92px">ポイント</span></div><div style="position:absolute;left:113px;top:188px;font-size:13px;line-height:17px;color:#cfcfcf;font-weight:normal;white-space:nowrap;-webkit-text-stroke:0.35px #cfcfcf;">8</div><div style="position:absolute;left:714px;top:132px;width:115px;height:18px;background:#2c2c2c;border-radius:2px;"></div><div style="position:absolute;left:717px;top:133px;font-size:13px;line-height:17px;color:#d4d4d4;font-weight:normal;white-space:nowrap;-webkit-text-stroke:0.35px #d4d4d4;"><span style="font-size:10.92px">デフォルトカメラ</span></div><svg style="left:813px;top:135px" width="16" height="14"><rect x="1" y="3" width="8" height="8" stroke="#cfcfcf" stroke-width="1.4" fill="none"/><path d="M10 7 L14 4 V10Z" fill="#cfcfcf"/></svg><svg style="left:0;top:0" width="2000" height="1149"><defs><linearGradient id="clg" x1="0" y1="0" x2="0.35" y2="1"><stop offset="0" stop-color="#cdcdcd"/><stop offset="0.5" stop-color="#c0c0c0"/><stop offset="1" stop-color="#acacac"/></linearGradient><linearGradient id="clg2" x1="0" y1="0" x2="1" y2="0"><stop offset="0" stop-color="#000" stop-opacity="0.25"/><stop offset="0.12" stop-color="#000" stop-opacity="0"/><stop offset="0.68" stop-color="#000" stop-opacity="0"/><stop offset="0.87" stop-color="#000" stop-opacity="0.16"/><stop offset="1" stop-color="#000" stop-opacity="0.2"/></linearGradient><clipPath id="vpclip"><rect x="48" y="131" width="1452" height="774"/></clipPath><clipPath id="clothclip"><path id="clothp" d=""/></clipPath><clipPath id="clothclipL"><path d="M401.0 313.0 C404.3 316.8 412.7 327.7 421.0 336.0 C429.3 344.3 440.2 355.3 451.0 363.0 C461.8 370.7 473.7 375.0 486.0 382.0 C498.3 389.0 512.2 398.1 525.0 405.0 C537.8 411.9 550.4 417.5 563.0 423.5 C575.6 429.5 587.8 435.2 600.6 441.0 C613.4 446.8 633.4 455.2 640.0 458.0 L640 930 L462 930 462.0 930.0 C461.5 926.0 460.8 916.5 459.0 906.0 C457.2 895.5 454.4 884.3 451.4 867.0 C448.4 849.7 443.7 820.5 441.0 802.0 C438.3 783.5 436.2 771.5 435.0 756.0 C433.8 740.5 435.8 726.8 434.0 709.0 C432.2 691.2 426.1 666.7 424.0 649.0 C421.9 631.3 423.1 620.8 421.5 603.0 C419.9 585.2 416.1 560.5 414.5 542.0 C412.9 523.5 412.2 508.2 412.0 492.0 C411.8 475.8 414.0 465.7 413.0 445.0 C412.0 424.3 408.0 390.0 406.0 368.0 C404.0 346.0 401.8 322.2 401.0 313.0Z"/></clipPath></defs><path d="M148.4 391 L48 371.5" stroke="#3a66b8" stroke-width="1.3"/><path d="M148.4 391 L122 131" stroke="#5cb070" stroke-width="1.2"/><path d="M148.4 391 L925 320.5 M889 318.5 L922 318.5 L928 322" stroke="#c9504a" stroke-width="1.5" fill="none"/><g clip-path="url(#vpclip)"><path d="M401.0 313.0 C404.3 316.8 412.7 327.7 421.0 336.0 C429.3 344.3 440.2 355.3 451.0 363.0 C461.8 370.7 473.7 375.0 486.0 382.0 C498.3 389.0 512.2 398.1 525.0 405.0 C537.8 411.9 550.4 417.5 563.0 423.5 C575.6 429.5 587.8 435.2 600.6 441.0 C613.4 446.8 633.4 455.2 640.0 458.0 L640 930 L462 930 462.0 930.0 C461.5 926.0 460.8 916.5 459.0 906.0 C457.2 895.5 454.4 884.3 451.4 867.0 C448.4 849.7 443.7 820.5 441.0 802.0 C438.3 783.5 436.2 771.5 435.0 756.0 C433.8 740.5 435.8 726.8 434.0 709.0 C432.2 691.2 426.1 666.7 424.0 649.0 C421.9 631.3 423.1 620.8 421.5 603.0 C419.9 585.2 416.1 560.5 414.5 542.0 C412.9 523.5 412.2 508.2 412.0 492.0 C411.8 475.8 414.0 465.7 413.0 445.0 C412.0 424.3 408.0 390.0 406.0 368.0 C404.0 346.0 401.8 322.2 401.0 313.0Z" fill="url(#clg)"/><path d="M401.0 313.0 C404.3 316.8 412.7 327.7 421.0 336.0 C429.3 344.3 440.2 355.3 451.0 363.0 C461.8 370.7 473.7 375.0 486.0 382.0 C498.3 389.0 512.2 398.1 525.0 405.0 C537.8 411.9 550.4 417.5 563.0 423.5 C575.6 429.5 587.8 435.2 600.6 441.0 C613.4 446.8 633.4 455.2 640.0 458.0 L640 930 L462 930 462.0 930.0 C461.5 926.0 460.8 916.5 459.0 906.0 C457.2 895.5 454.4 884.3 451.4 867.0 C448.4 849.7 443.7 820.5 441.0 802.0 C438.3 783.5 436.2 771.5 435.0 756.0 C433.8 740.5 435.8 726.8 434.0 709.0 C432.2 691.2 426.1 666.7 424.0 649.0 C421.9 631.3 423.1 620.8 421.5 603.0 C419.9 585.2 416.1 560.5 414.5 542.0 C412.9 523.5 412.2 508.2 412.0 492.0 C411.8 475.8 414.0 465.7 413.0 445.0 C412.0 424.3 408.0 390.0 406.0 368.0 C404.0 346.0 401.8 322.2 401.0 313.0Z" fill="url(#clg2)"/><g clip-path="url(#clothclipL)" stroke="#1a1a1a" stroke-width="0.95" fill="none"><path d="M422.6 336.4 C421.8 342.0 419.4 359.4 418.0 370.0 C416.6 380.6 415.3 387.5 414.5 400.0 C413.7 412.5 413.2 437.5 413.0 445.0"/><path d="M451.0 363.0 C447.7 369.7 437.3 389.3 431.0 403.0 C424.7 416.7 416.0 438.0 413.0 445.0"/><path d="M486.0 382.0 C481.7 388.2 468.2 406.0 460.0 419.0 C451.8 432.0 442.3 445.5 437.0 460.0 C431.7 474.5 430.4 490.7 428.0 506.0 C425.6 521.3 423.7 535.4 422.6 551.6 C421.5 567.8 421.7 594.4 421.5 603.0"/><path d="M525.0 405.0 C520.3 410.5 506.2 426.2 497.0 438.0 C487.8 449.8 477.5 462.2 470.0 476.0 C462.5 489.8 456.8 506.0 452.0 521.0 C447.2 536.0 443.7 550.2 441.5 566.0 C439.3 581.8 439.9 599.8 439.0 616.0 C438.1 632.2 436.8 647.5 436.0 663.0 C435.2 678.5 434.3 701.3 434.0 709.0"/><path d="M563.0 423.5 C557.8 428.4 541.9 441.8 532.0 453.0 C522.1 464.2 511.7 477.3 503.5 491.0 C495.3 504.7 488.6 520.0 483.0 535.0 C477.4 550.0 473.5 565.2 470.0 581.0 C466.5 596.8 464.3 611.8 462.0 630.0 C459.7 648.2 457.3 671.7 456.0 690.0 C454.7 708.3 454.7 725.8 454.0 740.0 C453.3 754.2 452.4 761.2 452.0 775.0 C451.6 788.8 451.5 807.3 451.4 823.0 C451.3 838.7 451.4 861.3 451.4 869.0"/><path d="M600.6 441.0 C595.2 445.7 578.4 458.5 568.0 469.0 C557.6 479.5 547.2 490.7 538.5 504.0 C529.8 517.3 522.1 533.9 515.6 549.0 C509.1 564.1 503.6 578.7 499.5 594.7 C495.4 610.7 492.9 628.3 491.0 645.0 C489.1 661.7 488.6 679.2 488.0 695.0 C487.4 710.8 488.9 723.8 487.7 740.0 C486.5 756.2 483.4 775.5 481.0 792.5 C478.6 809.5 475.7 825.9 473.6 842.0 C471.5 858.1 469.7 874.3 468.4 889.0 C467.1 903.7 466.4 923.2 466.0 930.0"/><path d="M640.0 458.0 C635.2 462.2 622.1 473.0 611.0 483.0 C599.9 493.0 584.1 504.8 573.6 518.0 C563.1 531.2 554.9 547.5 548.0 562.0 C541.1 576.5 535.8 589.5 532.0 605.0 C528.2 620.5 527.0 638.3 525.0 655.0 C523.0 671.7 520.9 690.8 520.0 705.0 C519.1 719.2 521.0 722.5 519.5 740.0 C518.0 757.5 513.8 789.9 511.0 810.0 C508.2 830.1 505.2 844.6 503.0 860.6 C500.8 876.6 499.2 894.4 498.0 906.0 C496.8 917.6 496.3 926.0 496.0 930.0"/><path d="M650.0 500.0 C643.5 504.5 622.4 514.6 611.0 527.0 C599.6 539.4 588.5 559.8 581.7 574.5 C574.9 589.2 573.3 599.1 570.0 615.0 C566.7 630.9 564.3 652.5 562.0 670.0 C559.7 687.5 558.3 701.7 556.0 720.0 C553.7 738.3 550.7 760.0 548.0 780.0 C545.3 800.0 542.2 819.0 540.0 840.0 C537.8 861.0 536.2 891.0 535.0 906.0 C533.8 921.0 533.3 926.0 533.0 930.0"/><path d="M640.0 560.0 C635.2 563.8 617.3 575.5 611.0 583.0 C604.7 590.5 604.5 592.2 602.0 605.0 C599.5 617.8 598.0 640.8 596.0 660.0 C594.0 679.2 592.0 698.3 590.0 720.0 C588.0 741.7 586.0 768.3 584.0 790.0 C582.0 811.7 580.0 830.7 578.0 850.0 C576.0 869.3 573.3 892.7 572.0 906.0 C570.7 919.3 570.3 926.0 570.0 930.0"/><path d="M630.0 640.0 C627.5 650.0 618.0 680.0 615.0 700.0 C612.0 720.0 612.8 738.3 612.0 760.0 C611.2 781.7 610.5 805.7 610.0 830.0 C609.5 854.3 609.2 893.3 609.0 906.0"/><path d="M406.0 368.0 C409.7 373.3 419.0 391.5 428.0 400.0 C437.0 408.5 448.5 412.7 460.0 419.0 C471.5 425.3 485.0 432.3 497.0 438.0 C509.0 443.7 520.2 447.8 532.0 453.0 C543.8 458.2 556.6 464.2 568.0 469.0 C579.4 473.8 588.6 477.2 600.6 481.5 C612.6 485.8 633.4 492.8 640.0 495.0"/><path d="M413.0 445.0 C417.0 447.5 427.5 454.8 437.0 460.0 C446.5 465.2 458.9 470.8 470.0 476.0 C481.1 481.2 492.1 486.3 503.5 491.0 C514.9 495.7 526.8 499.5 538.5 504.0 C550.2 508.5 561.5 514.2 573.6 518.0 C585.7 521.8 599.9 523.8 611.0 527.0 C622.1 530.2 635.2 535.3 640.0 537.0"/><path d="M412.0 492.0 C414.7 494.3 421.3 501.2 428.0 506.0 C434.7 510.8 442.8 516.2 452.0 521.0 C461.2 525.8 472.4 530.3 483.0 535.0 C493.6 539.7 504.8 544.5 515.6 549.0 C526.4 553.5 537.0 557.8 548.0 562.0 C559.0 566.2 571.2 571.0 581.7 574.5 C592.2 578.0 601.3 580.1 611.0 583.0 C620.7 585.9 635.2 590.5 640.0 592.0"/><path d="M414.5 542.0 C415.9 543.6 418.1 547.6 422.6 551.6 C427.1 555.6 433.6 561.1 441.5 566.0 C449.4 570.9 460.3 576.2 470.0 581.0 C479.7 585.8 489.2 589.9 499.5 594.7 C509.8 599.5 520.2 605.0 532.0 610.0 C543.8 615.0 556.8 620.0 570.0 625.0 C583.2 630.0 599.3 635.8 611.0 640.0 C622.7 644.2 635.2 648.3 640.0 650.0"/><path d="M421.5 603.0 C424.4 605.2 432.1 611.3 439.0 616.0 C445.9 620.7 454.2 625.8 463.0 631.0 C471.8 636.2 481.7 641.8 492.0 647.0 C502.3 652.2 513.7 656.5 525.0 662.0 C536.3 667.5 548.3 674.8 560.0 680.0 C571.7 685.2 586.5 689.8 595.0 693.0 C603.5 696.2 603.5 696.2 611.0 699.0 C618.5 701.8 635.2 708.2 640.0 710.0"/><path d="M424.0 649.0 C426.0 651.3 430.8 657.8 436.0 663.0 C441.2 668.2 446.3 674.3 455.0 680.0 C463.7 685.7 477.2 691.7 488.0 697.0 C498.8 702.3 508.8 706.5 520.0 712.0 C531.2 717.5 543.3 724.5 555.0 730.0 C566.7 735.5 580.7 740.8 590.0 745.0 C599.3 749.2 602.7 751.2 611.0 755.0 C619.3 758.8 635.2 765.8 640.0 768.0"/><path d="M434.0 709.0 C437.5 711.2 446.2 716.8 455.0 722.0 C463.8 727.2 476.2 734.2 487.0 740.0 C497.8 745.8 509.3 751.7 519.5 757.0 C529.7 762.3 537.1 766.2 548.0 772.0 C558.9 777.8 574.5 785.5 585.0 792.0 C595.5 798.5 601.8 805.5 611.0 811.0 C620.2 816.5 635.2 822.7 640.0 825.0"/><path d="M435.0 756.0 C437.8 759.2 444.3 768.9 452.0 775.0 C459.7 781.1 471.2 786.7 481.0 792.5 C490.8 798.3 499.8 804.1 511.0 810.0 C522.2 815.9 536.8 822.2 548.0 828.0 C559.2 833.8 567.5 838.7 578.0 845.0 C588.5 851.3 600.7 860.2 611.0 866.0 C621.3 871.8 635.2 877.7 640.0 880.0"/><path d="M441.0 802.0 C442.7 805.5 446.0 816.3 451.4 823.0 C456.8 829.7 465.0 835.7 473.6 842.0 C482.2 848.3 492.8 854.8 503.0 860.6 C513.2 866.4 523.5 871.3 535.0 877.0 C546.5 882.7 561.2 890.2 572.0 895.0 C582.8 899.8 588.7 901.0 600.0 906.0 C611.3 911.0 633.3 921.8 640.0 925.0"/><path d="M451.4 869.0 C454.2 872.3 462.3 883.0 468.4 889.0 C474.5 895.0 481.1 900.2 488.0 905.0 C494.9 909.8 506.3 915.8 510.0 918.0"/></g><path d="M401.0 313.0 C404.3 316.8 412.7 327.7 421.0 336.0 C429.3 344.3 440.2 355.3 451.0 363.0 C461.8 370.7 473.7 375.0 486.0 382.0 C498.3 389.0 512.2 398.1 525.0 405.0 C537.8 411.9 550.4 417.5 563.0 423.5 C575.6 429.5 587.8 435.2 600.6 441.0 C613.4 446.8 633.4 455.2 640.0 458.0 L640 930 L462 930 462.0 930.0 C461.5 926.0 460.8 916.5 459.0 906.0 C457.2 895.5 454.4 884.3 451.4 867.0 C448.4 849.7 443.7 820.5 441.0 802.0 C438.3 783.5 436.2 771.5 435.0 756.0 C433.8 740.5 435.8 726.8 434.0 709.0 C432.2 691.2 426.1 666.7 424.0 649.0 C421.9 631.3 423.1 620.8 421.5 603.0 C419.9 585.2 416.1 560.5 414.5 542.0 C412.9 523.5 412.2 508.2 412.0 492.0 C411.8 475.8 414.0 465.7 413.0 445.0 C412.0 424.3 408.0 390.0 406.0 368.0 C404.0 346.0 401.8 322.2 401.0 313.0Z" fill="none" stroke="#151515" stroke-width="1.2"/><path d="M400 367.6 L455 362.6" stroke="#c9504a" stroke-width="1.3" opacity="0.85"/></g><path d="M1241 395 L1180 414 L1089 442 L1261.6 442 L1270.4 407.7 L1262 390Z" fill="#b9b9b9"/><path d="M1180.5 413.8 L1175 442" stroke="#1e1e1e" stroke-width="1.1"/><path d="M1241 395 L1089 442 M1270.4 407.7 L1261.6 442" stroke="#111" stroke-width="1.2"/><path d="M383.5 300.5 L415 300 L415.5 322.5 L384 323Z" fill="#4a4a4a" stroke="#1a1a1a" stroke-width="1.3"/><path d="M384.5 301.5 L395.5 301 L395.5 322.5 L385 322.5Z" fill="#6e6e6e"/><path d="M395.5 301 V323 M401 301 V322" stroke="#222" stroke-width="1"/><path d="M394 299.5 H408" stroke="#777" stroke-width="1"/><circle cx="400" cy="311.5" r="2.8" fill="#e8e84a"/><path d="M402 311 L405 312" stroke="#c8c040" stroke-width="1"/><path d="M1242.8 364.3 L1260 361.5 L1298.6 365.2 L1282 367.5Z" fill="#9a9a9a"/><path d="M1242.8 364.3 L1282 367.5 L1278.8 407.2 L1240.5 404Z" fill="#8e8e8e"/><path d="M1282 367.5 L1298.6 365.2 L1295 403.5 L1278.8 407.2Z" fill="#686868"/><path d="M1242.8 364.3 L1260 361.5 L1298.6 365.2 L1295 403.5 L1278.8 407.2 L1240.5 404Z M1282 367.5 L1278.8 407.2 M1242.8 364.3 L1282 367.5 L1298.6 365.2" stroke="#5a8cb8" stroke-width="1.1" fill="none"/><circle cx="1240.5" cy="404" r="1.4" fill="#111"/><circle cx="1278.8" cy="407.2" r="1.4" fill="#111"/><circle cx="1295" cy="403.5" r="1.4" fill="#111"/><circle cx="1282" cy="367.5" r="1.4" fill="#111"/><circle cx="1298.6" cy="365.2" r="1.4" fill="#111"/><circle cx="1242.8" cy="364.3" r="1.4" fill="#111"/><path d="M1275 383 Q1273 387 1276 389" stroke="#e8e84a" stroke-width="1.5" fill="none"/><path d="M545.5 193.9 L550.7 201.6 L465.4 266.3 L476.9 282.3 L420.6 292 L446.6 241.5 L459.2 256.6Z" fill="#e7411f"/><path d="M1417.3 252.8 L1422.8 261 L1337.9 324.4 L1349.4 340.1 L1293.1 350.2 L1319.2 300.3 L1330.5 315.3Z" fill="#e7411f"/><path d="M1461 165 V150" stroke="#5cc46e" stroke-width="1.6"/><path d="M1461 165 L1444 162" stroke="#3c6fc4" stroke-width="1.6"/><path d="M1461 165 L1475 162" stroke="#d0504a" stroke-width="1.6"/></svg><div style="position:absolute;left:1456px;top:134px;font-size:13px;line-height:17px;color:#5cc46e;font-weight:normal;white-space:nowrap;-webkit-text-stroke:0.35px #5cc46e;">Y</div><div style="position:absolute;left:1432px;top:156px;font-size:13px;line-height:17px;color:#3c6fc4;font-weight:normal;white-space:nowrap;-webkit-text-stroke:0.35px #3c6fc4;">Z</div><div style="position:absolute;left:1478px;top:156px;font-size:13px;line-height:17px;color:#d0504a;font-weight:normal;white-space:nowrap;-webkit-text-stroke:0.35px #d0504a;">X</div><div style="position:absolute;left:50px;top:380px;width:82px;height:18px;background:rgba(30,30,30,0.55);border-radius:2px;"></div><div style="position:absolute;left:53px;top:381px;font-size:13px;line-height:17px;color:#d0d0d0;font-weight:normal;white-space:nowrap;-webkit-text-stroke:0.35px #d0d0d0;"><span style="font-size:10.92px">長方形選択</span></div><svg style="left:115px;top:382px" width="14" height="14"><rect x="1" y="1" width="11" height="11" stroke="#8a6a3a" stroke-width="1" fill="none" stroke-dasharray="1.5 1.5"/><path d="M5 4 L9 6.5 L5 9Z" fill="#aaa"/></svg><div style="position:absolute;left:1501px;top:104px;width:5px;height:802px;background:#1e1e1e;"></div><div style="position:absolute;left:1545px;top:62px;width:5px;height:380px;background:#1e1e1e;"></div><div style="position:absolute;left:1506px;top:80px;width:39px;height:37px;background:#363636;border-radius:3px;"></div><div style="position:absolute;left:1506px;top:131px;width:39px;height:157px;background:#363636;border-radius:3px;"></div><div style="position:absolute;left:1506px;top:302px;width:39px;height:120px;background:#363636;border-radius:3px;"></div><div style="position:absolute;left:1506px;top:424px;width:39px;height:36px;background:#363636;border-radius:3px;"></div><div style="position:absolute;left:1506px;top:168px;width:39px;height:1px;background:#2a2a2a;"></div><div style="position:absolute;left:1506px;top:208px;width:39px;height:1px;background:#2a2a2a;"></div><div style="position:absolute;left:1506px;top:248px;width:39px;height:1px;background:#2a2a2a;"></div><div style="position:absolute;left:1506px;top:342px;width:39px;height:1px;background:#2a2a2a;"></div><div style="position:absolute;left:1506px;top:382px;width:39px;height:1px;background:#2a2a2a;"></div><svg style="left:0;top:0" width="2000" height="460"><path d="M1514 90 V110 H1538" stroke="#c8c8f4" stroke-width="2.2" fill="none"/><path d="M1511 93 L1514 88 L1517 93 M1535 107 L1539 110 L1535 113" stroke="#c8c8f4" stroke-width="2" fill="none"/><circle cx="1530" cy="93" r="6.5" fill="#c8c8f4"/><rect x="1515" y="139" width="21" height="20" stroke="#8fd3f4" stroke-width="2.6" fill="none"/><path d="M1525 177 L1536 183 V196 L1525 202 L1514 196 V183Z" fill="#8fd3f4"/><path d="M1514 183 L1525 189 L1536 183 M1525 189 V202" stroke="#2a2a2a" stroke-width="1.4" fill="none"/><path d="M1514 220 V216 H1536 V220 M1525 216 V241 M1520 241 H1530" stroke="#8fd3f4" stroke-width="2.6" fill="none"/><path d="M1514 273 Q1525 282 1536 273" stroke="#c8c8c8" stroke-width="2" fill="none"/><circle cx="1514" cy="273" r="2.3" fill="#e8a64e"/><circle cx="1536" cy="273" r="2.3" fill="#e8a64e"/><path d="M1526 266 L1531 255 L1537 259Z" fill="#c8c8c8"/><circle cx="1525" cy="321" r="7" fill="#6fd77a"/><rect x="1513" y="309" width="24" height="24" stroke="#ddd" stroke-width="1.4" fill="none" stroke-dasharray="3 6"/><path d="M1525 350 L1531 354 V360 L1525 363 L1519 360 V354Z M1519 361 L1525 365 V372 L1519 375 L1513 372 V365Z M1531 361 L1537 365 V372 L1531 375 L1525 372 V365Z" fill="#6fd77a"/><circle cx="1525" cy="401.5" r="7.5" fill="#fff"/><rect x="1522" y="392" width="6" height="5" fill="#fff" transform="rotate(0 1525 401.5)"/><rect x="1522" y="392" width="6" height="5" fill="#fff" transform="rotate(60 1525 401.5)"/><rect x="1522" y="392" width="6" height="5" fill="#fff" transform="rotate(120 1525 401.5)"/><rect x="1522" y="392" width="6" height="5" fill="#fff" transform="rotate(180 1525 401.5)"/><rect x="1522" y="392" width="6" height="5" fill="#fff" transform="rotate(240 1525 401.5)"/><rect x="1522" y="392" width="6" height="5" fill="#fff" transform="rotate(300 1525 401.5)"/><circle cx="1525" cy="401.5" r="3.3" fill="#6fd77a" stroke="#222" stroke-width="0.8"/><circle cx="1525.0" cy="390.0" r="2.6" fill="#6fd77a"/><circle cx="1535.0" cy="395.8" r="2.6" fill="#6fd77a"/><circle cx="1535.0" cy="407.2" r="2.6" fill="#6fd77a"/><circle cx="1525.0" cy="413.0" r="2.6" fill="#6fd77a"/><circle cx="1515.0" cy="407.2" r="2.6" fill="#6fd77a"/><circle cx="1515.0" cy="395.8" r="2.6" fill="#6fd77a"/><path d="M1514 455 V440 L1522 433 L1531 438 L1534 446" stroke="#a0a0f0" stroke-width="2.4" fill="none"/><path d="M1518 440 L1526 444" stroke="#a0a0f0" stroke-width="2"/></svg><svg style="left:1539px;top:111px" width="6" height="6"><path d="M6 0 L6 6 L0 6Z" fill="#9a9a9a"/></svg><svg style="left:1539px;top:202px" width="6" height="6"><path d="M6 0 L6 6 L0 6Z" fill="#9a9a9a"/></svg><svg style="left:1539px;top:282px" width="6" height="6"><path d="M6 0 L6 6 L0 6Z" fill="#9a9a9a"/></svg><svg style="left:1539px;top:416px" width="6" height="6"><path d="M6 0 L6 6 L0 6Z" fill="#9a9a9a"/></svg><div style="position:absolute;left:1550px;top:62px;width:450px;height:347px;background:#282828;"></div><div style="position:absolute;left:1550px;top:66px;width:447px;height:24px;background:#1b1b1b;"></div><div style="position:absolute;left:1550px;top:66px;width:94px;height:24px;background:#282828;"></div><div style="position:absolute;left:1563px;top:69px;font-size:13px;line-height:17px;color:#d2d2d2;font-weight:normal;white-space:nowrap;-webkit-text-stroke:0.35px #d2d2d2;"><span style="font-size:10.92px">オブジェクト</span></div><div style="position:absolute;left:1659px;top:69px;font-size:13px;line-height:17px;color:#777;font-weight:normal;white-space:nowrap;-webkit-text-stroke:0.35px #777;"><span style="font-size:10.92px">テイク</span></div><svg style="left:1556px;top:95px" width="20" height="16"><path d="M1 2 H17 M1 7 H17 M1 12 H17" stroke="#bdbdbd" stroke-width="2"/></svg><div style="position:absolute;left:1584px;top:93px;font-size:13px;line-height:17px;color:#c8c8c8;font-weight:normal;white-space:nowrap;-webkit-text-stroke:0.35px #c8c8c8;"><span style="font-size:10.92px">ファイル</span></div><div style="position:absolute;left:1645px;top:93px;font-size:13px;line-height:17px;color:#c8c8c8;font-weight:normal;white-space:nowrap;-webkit-text-stroke:0.35px #c8c8c8;"><span style="font-size:10.92px">編集</span></div><div style="position:absolute;left:1684px;top:93px;font-size:13px;line-height:17px;color:#c8c8c8;font-weight:normal;white-space:nowrap;-webkit-text-stroke:0.35px #c8c8c8;"><span style="font-size:10.92px">表示</span></div><div style="position:absolute;left:1723px;top:93px;font-size:13px;line-height:17px;color:#e7d98a;font-weight:normal;white-space:nowrap;-webkit-text-stroke:0.35px #e7d98a;"><span style="font-size:10.92px">オブジェクト</span></div><div style="position:absolute;left:1806px;top:93px;font-size:13px;line-height:17px;color:#c8c8c8;font-weight:normal;white-space:nowrap;-webkit-text-stroke:0.35px #c8c8c8;"><span style="font-size:10.92px">タグ</span></div><svg style="left:1840px;top:96px" width="160" height="16"><path d="M6 3 L11 7.5 L6 12Z" fill="#cfcfcf"/><circle cx="79" cy="6" r="5" stroke="#aaa" stroke-width="1.6" fill="none"/><path d="M83 10 L87 14" stroke="#aaa" stroke-width="1.8"/><path d="M96 14 V6 L103 0.5 L110 6 V14 H105 V10 H101 V14Z" stroke="#aaa" stroke-width="1.5" fill="none"/><path d="M118 3 H131 M120 7 H129 M122 11 H127" stroke="#aaa" stroke-width="1.8"/><rect x="139" y="1" width="13" height="13" stroke="#aaa" stroke-width="1.6" fill="none"/><path d="M144 9 L153 0 M148 0 H153 V5" stroke="#aaa" stroke-width="1.6" fill="none"/></svg><div style="position:absolute;left:1552px;top:117px;width:443px;height:23px;background:#222222;"></div><div style="position:absolute;left:1552px;top:139px;width:443px;height:23px;background:#2a2a2a;"></div><div style="position:absolute;left:1552px;top:162px;width:443px;height:23px;background:#222222;"></div><div style="position:absolute;left:1552px;top:184px;width:443px;height:23px;background:#2a2a2a;"></div><div style="position:absolute;left:1552px;top:206px;width:443px;height:23px;background:#222222;"></div><div style="position:absolute;left:1741px;top:117px;width:1px;height:291px;background:#1a1a1a;"></div><svg style="left:1550px;top:117px" width="450" height="120"><path d="M10 0 V98 M10 11 H22 M10 33 H22 M34 67 V77 H40" stroke="#555" stroke-width="1" fill="none"/><rect x="4" y="50" width="11" height="11" stroke="#777" stroke-width="1" fill="none"/><path d="M6 55.5 H13" stroke="#999" stroke-width="1"/><rect x="4" y="95" width="11" height="11" stroke="#777" stroke-width="1" fill="none"/><path d="M6 100.5 H13 M9.5 97 V104" stroke="#999" stroke-width="1"/></svg><svg style="left:0;top:0" width="2000" height="240"><path d="M1576 122 L1583 134 H1569Z" fill="#8ed1f4"/><circle cx="1576" cy="122.5" r="2" fill="#fff"/><circle cx="1569.5" cy="134" r="2" fill="#fff"/><circle cx="1582.5" cy="134" r="2" fill="#fff"/><path d="M1576 144 L1583 156 H1569Z" fill="#8ed1f4"/><circle cx="1576" cy="144.5" r="2" fill="#fff"/><circle cx="1569.5" cy="156" r="2" fill="#fff"/><circle cx="1582.5" cy="156" r="2" fill="#fff"/><path d="M1588 189 L1595 201 H1581Z" fill="#8ed1f4"/><circle cx="1588" cy="189.5" r="2" fill="#fff"/><circle cx="1581.5" cy="201" r="2" fill="#fff"/><circle cx="1594.5" cy="201" r="2" fill="#fff"/><path d="M1570 166 L1574 164 Q1576 167 1579 164 L1583 166 L1585 171 L1582 172 V180 H1571 V172 L1568 171Z" fill="#6fd77a"/><path d="M1573 212 V225 H1584 M1584 222 L1587 225 L1584 228" stroke="#c8c8f4" stroke-width="1.6" fill="none"/><circle cx="1580" cy="215" r="4" fill="#c8c8f4"/><path d="M1590 224 H1610" stroke="#ccc" stroke-width="1.5"/><path d="M1708 123 L1715 127 L1708 131 L1701 127Z" fill="#666"/><path d="M1701 130 L1708 134 L1715 130" stroke="#666" stroke-width="1.3" fill="none"/><circle cx="1723" cy="124" r="2.9" fill="#555"/><circle cx="1723" cy="133" r="2.9" fill="#e46262"/><path d="M1708 145 L1715 149 L1708 153 L1701 149Z" fill="#666"/><path d="M1701 152 L1708 156 L1715 152" stroke="#666" stroke-width="1.3" fill="none"/><circle cx="1723" cy="146" r="2.9" fill="#555"/><circle cx="1723" cy="155" r="2.9" fill="#e46262"/><path d="M1708 168 L1715 172 L1708 176 L1701 172Z" fill="#666"/><path d="M1701 175 L1708 179 L1715 175" stroke="#666" stroke-width="1.3" fill="none"/><circle cx="1723" cy="169" r="2.9" fill="#555"/><circle cx="1723" cy="178" r="2.9" fill="#555"/><path d="M1708 190 L1715 194 L1708 198 L1701 194Z" fill="#666"/><path d="M1701 197 L1708 201 L1715 197" stroke="#666" stroke-width="1.3" fill="none"/><circle cx="1723" cy="191" r="2.9" fill="#555"/><circle cx="1723" cy="200" r="2.9" fill="#555"/><path d="M1708 212 L1715 216 L1708 220 L1701 216Z" fill="#666"/><path d="M1701 219 L1708 223 L1715 219" stroke="#666" stroke-width="1.3" fill="none"/><circle cx="1723" cy="213" r="2.9" fill="#e46262"/><circle cx="1723" cy="222" r="2.9" fill="#e46262"/><path d="M1729 175 L1732 178 L1738 171" stroke="#777" stroke-width="1.3" fill="none"/><path d="M1747 134 V121 H1760" stroke="#9a9cf4" stroke-width="2.2" fill="none"/><path d="M1750 131 V124 H1759 Q1757 130 1750 131Z" fill="#bbb"/><rect x="1769" y="121" width="13" height="13" fill="#d0d0d0"/><rect x="1771" y="123" width="4" height="4" fill="#222"/><rect x="1776" y="128" width="4" height="4" fill="#222"/><path d="M1747 156 V143 H1760" stroke="#9a9cf4" stroke-width="2.2" fill="none"/><path d="M1750 153 V146 H1759 Q1757 152 1750 153Z" fill="#bbb"/><rect x="1769" y="143" width="13" height="13" fill="#d0d0d0"/><rect x="1771" y="145" width="4" height="4" fill="#222"/><rect x="1776" y="150" width="4" height="4" fill="#222"/><rect x="1746" y="189" width="14" height="10" rx="3" stroke="#9a9cf4" stroke-width="2" fill="none"/><rect x="1750" y="192" width="6" height="4" fill="#9a9cf4"/><path d="M1744 194 H1748" stroke="#9a9cf4" stroke-width="2"/><rect x="1768" y="189" width="14" height="10" rx="3" stroke="#9a9cf4" stroke-width="2" fill="none"/><rect x="1772" y="192" width="6" height="4" fill="#9a9cf4"/><path d="M1766 194 H1770" stroke="#9a9cf4" stroke-width="2"/><path d="M1792 188 L1796 186 Q1798 189 1800 186 L1804 188 L1806 192 L1803 193 V201 H1793 V193 L1790 192Z" fill="#9a9cf4"/><path d="M1813 201 V188 H1826" stroke="#9a9cf4" stroke-width="2.2" fill="none"/><path d="M1816 198 V191 H1825 Q1823 197 1816 198Z" fill="#bbb"/><rect x="1836" y="188" width="13" height="13" fill="#d0d0d0"/><rect x="1838" y="190" width="4" height="4" fill="#222"/><rect x="1843" y="195" width="4" height="4" fill="#222"/></svg><div style="position:absolute;left:1589px;top:120px;font-size:13px;line-height:17px;color:#d8d8d8;font-weight:normal;white-space:nowrap;-webkit-text-stroke:0.35px #d8d8d8;">Control-L</div><div style="position:absolute;left:1589px;top:142px;font-size:13px;line-height:17px;color:#f0cc5a;font-weight:normal;white-space:nowrap;-webkit-text-stroke:0.35px #f0cc5a;">Control-R</div><div style="position:absolute;left:1590px;top:164px;font-size:13px;line-height:17px;color:#d0d0d0;font-weight:normal;white-space:nowrap;-webkit-text-stroke:0.35px #d0d0d0;"><span style="font-size:10.92px">クロスサーフェイス</span></div><div style="position:absolute;left:1601px;top:187px;font-size:13px;line-height:17px;color:#d0d0d0;font-weight:normal;white-space:nowrap;-webkit-text-stroke:0.35px #d0d0d0;"><span style="font-size:10.92px">平面</span></div><div class="a" style="left:1705px;top:108px;width:37px;height:62px;border:4.5px solid #e8401f"></div><div style="position:absolute;left:1550px;top:409px;width:450px;height:19px;background:#1c1c1c;"></div><div style="position:absolute;left:1554px;top:410px;font-size:13px;line-height:17px;color:#bbb;font-weight:normal;white-space:nowrap;-webkit-text-stroke:0.35px #bbb;">✕</div><div style="position:absolute;left:1577px;top:410px;font-size:13px;line-height:17px;color:#d0d0d0;font-weight:normal;white-space:nowrap;-webkit-text-stroke:0.35px #d0d0d0;"><span style="font-size:10.92px">アセットブラウザ</span> (3)</div><div style="position:absolute;left:1550px;top:428px;width:447px;height:206px;background:#262626;"></div><svg style="left:1556px;top:432px" width="20" height="16"><path d="M1 6.5 H17 M1 11.5 H17" stroke="#bdbdbd" stroke-width="2"/></svg><div style="position:absolute;left:1584px;top:432px;font-size:13px;line-height:17px;color:#d8d0a0;font-weight:normal;white-space:nowrap;-webkit-text-stroke:0.35px #d8d0a0;"><span style="font-size:10.92px">作成</span></div><div style="position:absolute;left:1622px;top:432px;font-size:13px;line-height:17px;color:#e7d98a;font-weight:normal;white-space:nowrap;-webkit-text-stroke:0.35px #e7d98a;"><span style="font-size:10.92px">編集</span></div><div style="position:absolute;left:1660px;top:432px;font-size:13px;line-height:17px;color:#c8c8c8;font-weight:normal;white-space:nowrap;-webkit-text-stroke:0.35px #c8c8c8;"><span style="font-size:10.92px">表示</span></div><svg style="left:1910px;top:434px" width="90" height="20"><rect x="6" y="1" width="15" height="15" stroke="#eee" stroke-width="2" fill="none" rx="1.5"/><rect x="8" y="9" width="11" height="5" fill="#eee"/><path d="M28 4 H42 M30 8.5 H40 M32 13 H38" stroke="#aaa" stroke-width="1.8"/><circle cx="57" cy="9" r="7" stroke="#eee" stroke-width="2" fill="none"/><circle cx="57" cy="9" r="3.2" fill="#eee"/><rect x="70" y="2" width="14" height="14" stroke="#888" stroke-width="1.6" fill="none"/><path d="M76 10 L85 1 M80 1 H85 V6" stroke="#888" stroke-width="1.6" fill="none"/></svg><div style="position:absolute;left:1700px;top:461px;width:237px;height:18px;background:#353535;border-radius:3px;"></div><div style="position:absolute;left:1860px;top:461px;width:1px;height:18px;background:#2a2a2a;"></div><div style="position:absolute;left:1784px;top:461px;width:1px;height:18px;background:#2a2a2a;"></div><div style="position:absolute;left:1761px;top:463px;font-size:13px;line-height:17px;color:#cfcfcf;font-weight:normal;white-space:nowrap;-webkit-text-stroke:0.35px #cfcfcf;"><span style="font-size:10.92px">ル</span></div><div style="position:absolute;left:1799px;top:463px;font-size:13px;line-height:17px;color:#cfcfcf;font-weight:normal;white-space:nowrap;-webkit-text-stroke:0.35px #cfcfcf;"><span style="font-size:10.92px">メディア</span></div><div style="position:absolute;left:1758px;top:480px;font-size:13px;line-height:17px;color:#cfcfcf;font-weight:normal;white-space:nowrap;-webkit-text-stroke:0.35px #cfcfcf;"><span style="font-size:10.92px">、</span></div><div style="position:absolute;left:1881px;top:463px;font-size:13px;line-height:17px;color:#cfcfcf;font-weight:normal;white-space:nowrap;-webkit-text-stroke:0.35px #cfcfcf;"><span style="font-size:10.92px">ノード</span></div><div style="position:absolute;left:1700px;top:481px;width:83px;height:19px;background:#353535;border-radius:0 0 3px 3px;"></div><div style="position:absolute;left:1700px;top:508px;width:268px;height:18px;background:#1c1c1c;border-radius:9px;"></div><div class="a" style="left:1973px;top:508px;width:19px;height:19px;border-radius:50%;background:#333"></div><svg style="left:1977px;top:513px" width="12" height="10"><path d="M2 3 L6 7 L10 3" stroke="#ddd" stroke-width="1.8" fill="none"/></svg><div style="position:absolute;left:1700px;top:556px;width:295px;height:1px;background:#333;"></div><div style="position:absolute;left:1768px;top:565px;width:38px;height:19px;background:#303030;border-radius:3px;"></div><div style="position:absolute;left:1768px;top:565px;width:19px;height:19px;background:#5a5ea8;border-radius:3px 0 0 3px;"></div><svg style="left:1768px;top:565px" width="40" height="20"><path d="M5 5.5 H6 M8 5.5 H15 M5 9.5 H6 M8 9.5 H15 M5 13.5 H6 M8 13.5 H15" stroke="#c8c8f4" stroke-width="1.6"/><rect x="23" y="5" width="5" height="4" fill="#bbb"/><rect x="30" y="5" width="5" height="4" fill="#bbb"/><rect x="23" y="11" width="5" height="4" fill="#bbb"/><rect x="30" y="11" width="5" height="4" fill="#bbb"/></svg><div style="position:absolute;left:1907px;top:566px;width:4px;height:18px;background:#aaa;border-radius:1px;"></div><div style="position:absolute;left:1911px;top:573px;width:84px;height:4px;background:#1c1c1c;border-radius:2px;"></div><div style="position:absolute;left:1700px;top:587px;width:295px;height:1px;background:#333;"></div><div style="position:absolute;left:1700px;top:596px;width:142px;height:18px;background:#353535;border-radius:3px;"></div><div style="position:absolute;left:1777px;top:596px;width:1px;height:18px;background:#2a2a2a;"></div><div style="position:absolute;left:1761px;top:597px;font-size:13px;line-height:17px;color:#cfcfcf;font-weight:normal;white-space:nowrap;-webkit-text-stroke:0.35px #cfcfcf;"><span style="font-size:10.92px">ド</span></div><div style="position:absolute;left:1781px;top:597px;font-size:13px;line-height:17px;color:#cfcfcf;font-weight:normal;white-space:nowrap;-webkit-text-stroke:0.35px #cfcfcf;"><span style="font-size:10.92px">バージョン</span></div><svg style="left:1950px;top:596px" width="50" height="20"><rect x="2" y="2" width="12" height="13" stroke="#444" stroke-width="1.4" fill="none"/><rect x="5" y="5" width="12" height="13" stroke="#444" stroke-width="1.4" fill="none"/><path d="M30 2 L28 18 M36 2 L34 18 M26 7 H39 M25 13 H38" stroke="#555" stroke-width="1.8"/></svg><div style="position:absolute;left:1550px;top:634px;width:450px;height:515px;background:#2a2a2a;"></div><div style="position:absolute;left:1550px;top:634px;width:450px;height:25px;background:#1c1c1c;"></div><svg style="left:1815px;top:662px" width="185" height="22"><path d="M8 10 H22 M8 10 L14 4 M8 10 L14 16" stroke="#aaa" stroke-width="2" fill="none"/><path d="M30 10 H44 M44 10 L38 4 M44 10 L38 16" stroke="#555" stroke-width="2" fill="none"/><path d="M61 18 V3 M61 3 L55 9 M61 3 L67 9" stroke="#aaa" stroke-width="2" fill="none"/><circle cx="81" cy="8" r="5" stroke="#aaa" stroke-width="1.8" fill="none"/><path d="M85 12 L89 16" stroke="#aaa" stroke-width="2"/><path d="M97 4 H111 M99 9 H109 M101 14 H107" stroke="#aaa" stroke-width="1.8"/><rect x="119" y="9" width="13" height="9" stroke="#aaa" stroke-width="1.6" fill="none"/><path d="M122 9 V6 Q125.5 1 129 6 V9" stroke="#aaa" stroke-width="1.6" fill="none"/><circle cx="150" cy="10" r="8" stroke="#aaa" stroke-width="1.6" fill="none"/><circle cx="150" cy="10" r="3.5" stroke="#aaa" stroke-width="1.5" fill="none"/><rect x="165" y="2" width="15" height="15" stroke="#aaa" stroke-width="1.6" fill="none"/><path d="M171 11 L181 1 M175 1 H181 V7" stroke="#aaa" stroke-width="1.6" fill="none"/></svg><div style="position:absolute;left:1852px;top:692px;width:143px;height:19px;background:#3a3a3a;border-radius:9px 3px 3px 9px;"></div><div style="position:absolute;left:1973px;top:692px;width:1px;height:19px;background:#2a2a2a;"></div><div style="position:absolute;left:1859px;top:693px;font-size:13px;line-height:17px;color:#d4d4d4;font-weight:normal;white-space:nowrap;-webkit-text-stroke:0.35px #d4d4d4;"><span style="font-size:10.92px">デフォルト</span></div><svg style="left:1978px;top:696px" width="14" height="10"><path d="M2 3 L6 7 L10 3" stroke="#ddd" stroke-width="1.8" fill="none"/></svg><div style="position:absolute;left:1700px;top:765px;width:295px;height:18px;background:#303030;"></div><div style="position:absolute;left:1700px;top:786px;width:295px;height:1px;background:#333;"></div><div style="position:absolute;left:1700px;top:794px;width:294px;height:18px;background:#1c1c1c;border-radius:3px;"></div><div style="position:absolute;left:1700px;top:817px;width:257px;height:17px;background:#1e1e1e;border-radius:3px;"></div><svg style="left:1958px;top:818px" width="42" height="20"><path d="M3 6 L7 10 L11 6" stroke="#ddd" stroke-width="1.8" fill="none"/><path d="M19 17 L30 6 L33 9 L22 20 Z" stroke="#bbb" stroke-width="1.5" fill="none"/><circle cx="33" cy="5" r="3" fill="#bbb"/></svg><div style="position:absolute;left:1700px;top:837px;width:293px;height:19px;background:#3a3a3a;border-radius:3px;"></div><svg style="left:1977px;top:842px" width="14" height="10"><path d="M2 2 L6 6 L10 2" stroke="#ddd" stroke-width="1.8" fill="none"/></svg><div style="position:absolute;left:1700px;top:858px;width:293px;height:19px;background:#3a3a3a;border-radius:3px;"></div><svg style="left:1977px;top:863px" width="14" height="10"><path d="M2 2 L6 6 L10 2" stroke="#ddd" stroke-width="1.8" fill="none"/></svg><div style="position:absolute;left:1700px;top:888px;width:293px;height:19px;background:#3a3a3a;border-radius:3px;"></div><svg style="left:1977px;top:893px" width="14" height="10"><path d="M2 2 L6 6 L10 2" stroke="#ddd" stroke-width="1.8" fill="none"/></svg><div style="position:absolute;left:1700px;top:882px;width:295px;height:1px;background:#333;"></div><div style="position:absolute;left:1700px;top:908px;width:90px;height:18px;background:#2e2e2e;border:1px solid #1c1c1c;"></div><svg style="left:1798px;top:906px" width="22" height="22"><path d="M3 19 L14 8 L17 11 L6 22 Z" stroke="#555" stroke-width="1.5" fill="none"/><circle cx="17" cy="6" r="3" fill="#555"/></svg><div style="position:absolute;left:1700px;top:1096px;width:297px;height:1px;background:#1c1c1c;"></div><div style="position:absolute;left:1700px;top:1101px;width:202px;height:19px;background:#3a3a3a;border-radius:3px;"></div><div style="position:absolute;left:1772px;top:1102px;font-size:13px;line-height:17px;color:#d4d4d4;font-weight:normal;white-space:nowrap;-webkit-text-stroke:0.35px #d4d4d4;"><span style="font-size:10.92px">オブジェクト</span> (<span style="font-size:10.92px">相対</span>)</div><svg style="left:1886px;top:1106px" width="14" height="10"><path d="M2 2 L6 6 L10 2" stroke="#ddd" stroke-width="1.8" fill="none"/></svg><div style="position:absolute;left:1910px;top:1101px;width:81px;height:19px;background:#2e2e2e;border-radius:3px;"></div><div style="position:absolute;left:1918px;top:1102px;font-size:13px;line-height:17px;color:#666;font-weight:normal;white-space:nowrap;-webkit-text-stroke:0.35px #666;"><span style="font-size:10.92px">サイズ</span></div><svg style="left:1973px;top:1106px" width="14" height="10"><path d="M2 2 L6 6 L10 2" stroke="#666" stroke-width="1.8" fill="none"/></svg><div style="position:absolute;left:1700px;top:1128px;width:149px;height:18px;background:#1c1c1c;border-radius:3px;"></div><div style="position:absolute;left:1772px;top:1129px;font-size:13px;line-height:17px;color:#d8d8d8;font-weight:normal;white-space:nowrap;-webkit-text-stroke:0.35px #d8d8d8;">0 °</div><div style="position:absolute;left:1836px;top:1129px;font-size:15px;line-height:19px;color:#999;font-weight:normal;white-space:nowrap;-webkit-text-stroke:0.35px #999;">›</div><div style="position:absolute;left:1856px;top:1128px;width:135px;height:18px;background:#1c1c1c;border-radius:3px;"></div><div style="position:absolute;left:1859px;top:1129px;font-size:15px;line-height:19px;color:#999;font-weight:normal;white-space:nowrap;-webkit-text-stroke:0.35px #999;">‹</div><div style="position:absolute;left:1908px;top:1129px;font-size:13px;line-height:17px;color:#d8d8d8;font-weight:normal;white-space:nowrap;-webkit-text-stroke:0.35px #d8d8d8;">0 cm</div><div style="position:absolute;left:1980px;top:1129px;font-size:15px;line-height:19px;color:#999;font-weight:normal;white-space:nowrap;-webkit-text-stroke:0.35px #999;">›</div><div style="position:absolute;left:46px;top:907px;width:566px;height:242px;background:#262626;"></div><div class="a" style="left:47px;top:910px;width:3px;height:32px;background-image:radial-gradient(#444 0.8px,transparent 0.9px);background-size:3px 4px"></div><div class="a" style="left:47px;top:950px;width:3px;height:46px;background-image:radial-gradient(#444 0.8px,transparent 0.9px);background-size:3px 4px"></div><div class="a" style="left:47px;top:1034px;width:3px;height:30px;background-image:radial-gradient(#444 0.8px,transparent 0.9px);background-size:3px 4px"></div><div style="position:absolute;left:59px;top:912px;width:29px;height:29px;background:#353535;border-radius:3px;"></div><svg style="left:59px;top:912px" width="29" height="29"><path d="M14.5 6 L23 14.5 L14.5 23 L6 14.5Z" stroke="#cfcfcf" stroke-width="1.8" fill="none"/></svg><div style="position:absolute;left:384px;top:912px;width:217px;height:29px;background:#353535;border-radius:3px;"></div><div style="position:absolute;left:415px;top:912px;width:1px;height:29px;background:#2c2c2c;"></div><div style="position:absolute;left:446px;top:912px;width:1px;height:29px;background:#2c2c2c;"></div><div style="position:absolute;left:477px;top:912px;width:1px;height:29px;background:#2c2c2c;"></div><div style="position:absolute;left:508px;top:912px;width:1px;height:29px;background:#2c2c2c;"></div><div style="position:absolute;left:539px;top:912px;width:1px;height:29px;background:#2c2c2c;"></div><div style="position:absolute;left:570px;top:912px;width:1px;height:29px;background:#2c2c2c;"></div><svg style="left:384px;top:912px" width="220" height="29"><rect x="7" y="8" width="2.5" height="14" fill="#bbb"/><path d="M22 8 L11 15 L22 22Z" fill="#bbb"/><path d="M36 15 L40 11 L44 15 L40 19Z" stroke="#bbb" stroke-width="1.5" fill="none"/><path d="M56 8 L45 15 L56 22Z" fill="#bbb"/><path d="M80 8 L70 15 L80 22Z" fill="#bbb"/><rect x="81.5" y="8" width="2.5" height="14" fill="#bbb"/><path d="M102 7 L115 15 L102 23Z" fill="#bbb"/><rect x="133" y="8" width="2.5" height="14" fill="#bbb"/><path d="M137 8 L148 15 L137 22Z" fill="#bbb"/><path d="M160 8 L171 15 L160 22Z" fill="#bbb"/><path d="M173 15 L177 11 L181 15 L177 19Z" stroke="#bbb" stroke-width="1.5" fill="none"/><path d="M195 8 L206 15 L195 22Z" fill="#bbb"/><rect x="207" y="8" width="2.5" height="14" fill="#bbb"/></svg><svg style="left:0;top:940px" width="612" height="40"><path d="M60 28 H612" stroke="#333" stroke-width="1"/><rect x="72.8" y="30" width="1.6" height="5" fill="#cfcfcf"/><rect x="88.4" y="30" width="1.6" height="4" fill="#cfcfcf"/><rect x="104.1" y="30" width="1.6" height="4" fill="#cfcfcf"/><rect x="119.7" y="30" width="1.6" height="4" fill="#cfcfcf"/><rect x="135.3" y="30" width="1.6" height="4" fill="#cfcfcf"/><rect x="150.9" y="30" width="1.6" height="5" fill="#cfcfcf"/><rect x="166.6" y="30" width="1.6" height="4" fill="#cfcfcf"/><rect x="182.2" y="30" width="1.6" height="4" fill="#cfcfcf"/><rect x="197.8" y="30" width="1.6" height="4" fill="#cfcfcf"/><rect x="213.5" y="30" width="1.6" height="4" fill="#cfcfcf"/><rect x="229.1" y="30" width="1.6" height="5" fill="#cfcfcf"/><rect x="244.7" y="30" width="1.6" height="4" fill="#cfcfcf"/><rect x="260.4" y="30" width="1.6" height="4" fill="#cfcfcf"/><rect x="276.0" y="30" width="1.6" height="4" fill="#cfcfcf"/><rect x="291.6" y="30" width="1.6" height="4" fill="#cfcfcf"/><rect x="307.2" y="30" width="1.6" height="5" fill="#cfcfcf"/><rect x="322.9" y="30" width="1.6" height="4" fill="#cfcfcf"/><rect x="338.5" y="30" width="1.6" height="4" fill="#cfcfcf"/><rect x="354.1" y="30" width="1.6" height="4" fill="#cfcfcf"/><rect x="369.8" y="30" width="1.6" height="4" fill="#cfcfcf"/><rect x="385.4" y="30" width="1.6" height="5" fill="#cfcfcf"/><rect x="401.0" y="30" width="1.6" height="4" fill="#cfcfcf"/><rect x="416.7" y="30" width="1.6" height="4" fill="#cfcfcf"/><rect x="432.3" y="30" width="1.6" height="4" fill="#cfcfcf"/><rect x="447.9" y="30" width="1.6" height="4" fill="#cfcfcf"/><rect x="463.6" y="30" width="1.6" height="5" fill="#cfcfcf"/><rect x="479.2" y="30" width="1.6" height="4" fill="#cfcfcf"/><rect x="494.8" y="30" width="1.6" height="4" fill="#cfcfcf"/><rect x="510.4" y="30" width="1.6" height="4" fill="#cfcfcf"/><rect x="526.1" y="30" width="1.6" height="4" fill="#cfcfcf"/><rect x="541.7" y="30" width="1.6" height="5" fill="#cfcfcf"/><rect x="557.3" y="30" width="1.6" height="4" fill="#cfcfcf"/><rect x="573.0" y="30" width="1.6" height="4" fill="#cfcfcf"/><rect x="588.6" y="30" width="1.6" height="4" fill="#cfcfcf"/><rect x="604.2" y="30" width="1.6" height="4" fill="#cfcfcf"/><rect x="72.8" y="18" width="1.6" height="17" fill="#cfcfcf"/><rect x="542.2" y="18" width="1.6" height="17" fill="#cfcfcf"/></svg><div style="position:absolute;left:53.599999999999994px;top:948px;font-size:12.5px;line-height:16.5px;color:#d4d4d4;font-weight:normal;white-space:nowrap;-webkit-text-stroke:0.35px #d4d4d4;width:40px;text-align:center;">0</div><div style="position:absolute;left:131.75px;top:948px;font-size:12.5px;line-height:16.5px;color:#d4d4d4;font-weight:normal;white-space:nowrap;-webkit-text-stroke:0.35px #d4d4d4;width:40px;text-align:center;">5</div><div style="position:absolute;left:209.9px;top:948px;font-size:12.5px;line-height:16.5px;color:#d4d4d4;font-weight:normal;white-space:nowrap;-webkit-text-stroke:0.35px #d4d4d4;width:40px;text-align:center;">10</div><div style="position:absolute;left:288.05px;top:948px;font-size:12.5px;line-height:16.5px;color:#d4d4d4;font-weight:normal;white-space:nowrap;-webkit-text-stroke:0.35px #d4d4d4;width:40px;text-align:center;">15</div><div style="position:absolute;left:366.20000000000005px;top:948px;font-size:12.5px;line-height:16.5px;color:#d4d4d4;font-weight:normal;white-space:nowrap;-webkit-text-stroke:0.35px #d4d4d4;width:40px;text-align:center;">20</div><div style="position:absolute;left:444.35px;top:948px;font-size:12.5px;line-height:16.5px;color:#d4d4d4;font-weight:normal;white-space:nowrap;-webkit-text-stroke:0.35px #d4d4d4;width:40px;text-align:center;">25</div><div style="position:absolute;left:522.5px;top:948px;font-size:12.5px;line-height:16.5px;color:#d4d4d4;font-weight:normal;white-space:nowrap;-webkit-text-stroke:0.35px #d4d4d4;width:40px;text-align:center;">30</div><div style="position:absolute;left:59px;top:978px;width:107px;height:18px;background:#1a1a1a;border-radius:3px;"></div><div style="position:absolute;left:63px;top:978px;font-size:15px;line-height:19px;color:#999;font-weight:normal;white-space:nowrap;-webkit-text-stroke:0.35px #999;">‹</div><div style="position:absolute;left:155px;top:978px;font-size:15px;line-height:19px;color:#999;font-weight:normal;white-space:nowrap;-webkit-text-stroke:0.35px #999;">›</div><div style="position:absolute;left:102px;top:980px;font-size:13px;line-height:17px;color:#dcdcdc;font-weight:normal;white-space:nowrap;-webkit-text-stroke:0.35px #dcdcdc;letter-spacing:1px;">0 F</div><div style="position:absolute;left:175px;top:978px;width:437px;height:18px;background:#3c3c3c;border-radius:3px 0 0 3px;"></div><div style="position:absolute;left:180px;top:981px;width:1.5px;height:12px;background:#777;"></div><div style="position:absolute;left:184px;top:981px;width:1.5px;height:12px;background:#777;"></div><div style="position:absolute;left:192px;top:980px;font-size:13px;line-height:17px;color:#dcdcdc;font-weight:normal;white-space:nowrap;-webkit-text-stroke:0.35px #dcdcdc;letter-spacing:1px;">0 F</div><div style="position:absolute;left:46px;top:999px;width:566px;height:3px;background:#1e1e1e;"></div><div style="position:absolute;left:46px;top:1002px;width:566px;height:147px;background:#292929;"></div><svg style="left:50px;top:1006px" width="22" height="16"><path d="M3 3 H19 M3 8 H19 M3 13 H19" stroke="#bdbdbd" stroke-width="2"/></svg><div style="position:absolute;left:80px;top:1005px;font-size:13px;line-height:17px;color:#cfcfcf;font-weight:normal;white-space:nowrap;-webkit-text-stroke:0.35px #cfcfcf;"><span style="font-size:10.92px">作成</span></div><div style="position:absolute;left:119px;top:1005px;font-size:13px;line-height:17px;color:#cfcfcf;font-weight:normal;white-space:nowrap;-webkit-text-stroke:0.35px #cfcfcf;"><span style="font-size:10.92px">編集</span></div><div style="position:absolute;left:159px;top:1005px;font-size:13px;line-height:17px;color:#cfcfcf;font-weight:normal;white-space:nowrap;-webkit-text-stroke:0.35px #cfcfcf;"><span style="font-size:10.92px">ビュー</span></div><div style="position:absolute;left:208px;top:1005px;font-size:13px;line-height:17px;color:#cfcfcf;font-weight:normal;white-space:nowrap;-webkit-text-stroke:0.35px #cfcfcf;"><span style="font-size:10.92px">選択</span></div><div style="position:absolute;left:248px;top:1005px;font-size:13px;line-height:17px;color:#cfcfcf;font-weight:normal;white-space:nowrap;-webkit-text-stroke:0.35px #cfcfcf;"><span style="font-size:10.92px">マテリアル</span></div><div style="position:absolute;left:320px;top:1005px;font-size:13px;line-height:17px;color:#cfcfcf;font-weight:normal;white-space:nowrap;-webkit-text-stroke:0.35px #cfcfcf;"><span style="font-size:10.92px">テクスチャ</span></div><div style="position:absolute;left:60px;top:1034px;width:124px;height:29px;background:#353535;border-radius:3px;"></div><div style="position:absolute;left:89px;top:1034px;width:1px;height:29px;background:#2c2c2c;"></div><div style="position:absolute;left:120px;top:1034px;width:1px;height:29px;background:#2c2c2c;"></div><div style="position:absolute;left:152px;top:1034px;width:1px;height:29px;background:#2c2c2c;"></div><svg style="left:60px;top:1034px" width="130" height="30"><polygon points="15.00,0.70 26.78,7.50 26.78,21.10 15.00,27.90 3.22,21.10 3.22,7.50" fill="#e27474"/><path d="M15 0.7 L26.8 7.5 L15 14.3Z" fill="#ec9090" opacity="0.5"/><circle cx="15" cy="14.3" r="7.6" fill="#e03434" stroke="#8a1010" stroke-width="1.6"/><path d="M46 7 V22 M38.5 14.5 H53.5" stroke="#cfcfcf" stroke-width="1.8"/><path d="M59 29 L59 23 L53 29Z" fill="#aaa"/><path d="M70 23 L84 9 M77 9 H84 V16" stroke="#555" stroke-width="1.5" fill="none"/><path d="M99.5 24.5 L112 12 L115 15 L102.5 27.5 L99 28Z" stroke="#cfcfcf" stroke-width="1.5" fill="none"/><path d="M108.5 8.5 L116.5 16.5" stroke="#cfcfcf" stroke-width="2"/><path d="M113 8 L115.5 5.5 Q117 4.5 118.5 6 Q119.5 7.5 118 9 L115.5 11.5Z" fill="#cfcfcf"/></svg><div class="a" style="left:611px;top:442px;width:1156px;height:707px;background:#2b2b2b;border-radius:10px 10px 0 0;overflow:hidden;box-shadow:0 0 0 1px rgba(0,0,0,0.75)"><div class="a" style="left:0;top:0;width:1156px;height:32px;background:#eceff1"></div></div><div style="position:absolute;left:611px;top:473px;width:1156px;height:1px;background:#1a1a1a;"></div><div class="a" style="left:620.0px;top:451.09999999999997px;width:13.2px;height:13.2px;border-radius:50%;background:#ee5e56;border:0.5px solid #d9473f"></div><div class="a" style="left:642.4px;top:451.09999999999997px;width:13.2px;height:13.2px;border-radius:50%;background:#f5bc2f;border:0.5px solid #dca024"></div><div class="a" style="left:664.4px;top:451.09999999999997px;width:13.2px;height:13.2px;border-radius:50%;background:#5fc53f;border:0.5px solid #47a92c"></div><div style="position:absolute;left:1088px;top:447px;font-size:15.5px;line-height:19.5px;color:#2a2a2a;font-weight:normal;white-space:nowrap;-webkit-text-stroke:0.35px #2a2a2a;width:200px;text-align:center;-webkit-text-stroke:0.5px #2a2a2a;"><span style="font-size:13.02px">画像ビューアー</span></div><svg style="left:615px;top:476px" width="24" height="20"><path d="M2 4 H19 M2 9 H19 M2 14 H19" stroke="#f2f2f2" stroke-width="2.6"/></svg><div style="position:absolute;left:645px;top:476px;font-size:13px;line-height:17px;color:#d0d0d0;font-weight:normal;white-space:nowrap;-webkit-text-stroke:0.35px #d0d0d0;"><span style="font-size:10.92px">ファイル</span></div><div style="position:absolute;left:706px;top:476px;font-size:13px;line-height:17px;color:#d0d0d0;font-weight:normal;white-space:nowrap;-webkit-text-stroke:0.35px #d0d0d0;"><span style="font-size:10.92px">編集</span></div><div style="position:absolute;left:745px;top:476px;font-size:13px;line-height:17px;color:#d0d0d0;font-weight:normal;white-space:nowrap;-webkit-text-stroke:0.35px #d0d0d0;"><span style="font-size:10.92px">ビュー</span></div><div style="position:absolute;left:795px;top:476px;font-size:13px;line-height:17px;color:#d0d0d0;font-weight:normal;white-space:nowrap;-webkit-text-stroke:0.35px #d0d0d0;"><span style="font-size:10.92px">比較</span></div><div style="position:absolute;left:835px;top:476px;font-size:13px;line-height:17px;color:#d0d0d0;font-weight:normal;white-space:nowrap;-webkit-text-stroke:0.35px #d0d0d0;"><span style="font-size:10.92px">アニメーション</span></div><svg style="left:1680px;top:476px" width="90" height="20"><rect x="5" y="3" width="15" height="14" stroke="#aaa" stroke-width="1.6" fill="none" rx="1"/><rect x="14" y="4" width="5" height="12" fill="#aaa"/><rect x="27" y="3" width="14" height="14" stroke="#aaa" stroke-width="1.6" fill="none"/><path d="M33 11 L43 1 M37 1 H43 V7" stroke="#aaa" stroke-width="1.6" fill="none"/><g transform="translate(48 1) scale(0.95)" fill="#aaa"><rect x="3.2" y="3" width="3" height="10" rx="1.5"/><rect x="6.6" y="0.8" width="3" height="11" rx="1.5"/><rect x="10" y="1.5" width="3" height="11" rx="1.5"/><rect x="13.3" y="3.5" width="2.8" height="10" rx="1.4"/><path d="M3.2 9 H16.1 V12.5 Q16.1 18 10 18 Q6 18 3.5 14.5 L0.6 10.5 Q0 9.2 1.3 8.8 Q2.4 8.5 3.2 9.5Z"/></g><path d="M76 1 L80.5 6 H77.3 V8 H74.7 V6 H71.5Z" fill="#aaa"/><rect x="68" y="9" width="16" height="1.8" fill="#aaa"/><path d="M76 18 L83 11.8 H69Z" fill="#aaa"/></svg><div class="a" style="left:612px;top:505px;width:4px;height:29px;background-image:radial-gradient(#444 0.8px,transparent 0.9px);background-size:3px 4px"></div><div style="position:absolute;left:624px;top:505px;width:61px;height:29px;background:#353535;border-radius:3px;"></div><div style="position:absolute;left:698px;top:505px;width:29px;height:29px;background:#353535;border-radius:3px;"></div><div style="position:absolute;left:740px;top:505px;width:61px;height:29px;background:#353535;border-radius:3px;"></div><div style="position:absolute;left:814px;top:505px;width:29px;height:29px;background:#353535;border-radius:3px;"></div><div style="position:absolute;left:856px;top:505px;width:29px;height:29px;background:#353535;border-radius:3px;"></div><div style="position:absolute;left:890px;top:505px;width:92px;height:29px;background:#353535;border-radius:3px;"></div><div style="position:absolute;left:986px;top:505px;width:60px;height:29px;background:#353535;border-radius:3px;"></div><div style="position:absolute;left:770px;top:505px;width:31px;height:29px;background:#5a5ea8;border-radius:0 3px 3px 0;"></div><div style="position:absolute;left:654px;top:505px;width:1px;height:29px;background:#2c2c2c;"></div><div style="position:absolute;left:770px;top:505px;width:1px;height:29px;background:#2c2c2c;"></div><div style="position:absolute;left:919px;top:505px;width:1px;height:29px;background:#2c2c2c;"></div><div style="position:absolute;left:951px;top:505px;width:1px;height:29px;background:#2c2c2c;"></div><div style="position:absolute;left:1015px;top:505px;width:1px;height:29px;background:#2c2c2c;"></div><svg style="left:0;top:0" width="2000" height="560"><path d="M629 512 H637 L639 515 H649 V527 H629Z" stroke="#c8c8c8" stroke-width="1.8" fill="none"/><path d="M661 511 H673 L677 515 V528 H661Z" fill="#c8c8c8"/><path d="M669 514 V524 M665 520 L669 524 L673 520" stroke="#333" stroke-width="1.8" fill="none"/><circle cx="712" cy="519.5" r="9" stroke="#5a5a5a" stroke-width="1.8" fill="none"/><path d="M706 513.5 L718 525.5" stroke="#5a5a5a" stroke-width="1.8"/><rect x="746" y="511" width="17" height="17" stroke="#c8c8c8" stroke-width="1.6" fill="none" stroke-dasharray="2 1.2"/><rect x="749" y="514" width="11" height="11" stroke="#c8c8c8" stroke-width="1.4" fill="none"/><path d="M751.5 516.5 L757.5 522.5 M757.5 516.5 L751.5 522.5" stroke="#c8c8c8" stroke-width="1.4"/><rect x="777" y="511" width="17" height="17" stroke="#c8c8f4" stroke-width="1.6" fill="none" stroke-dasharray="2 1.2"/><rect x="780" y="514" width="11" height="11" stroke="#c8c8f4" stroke-width="1.4" fill="none"/><path d="M782.5 517.5 H788.5 M782.5 521.5 H788.5" stroke="#c8c8f4" stroke-width="1.6"/><path d="M801 534 V528 L795 534Z" fill="#aaa"/><circle cx="828.5" cy="519.5" r="9.5" stroke="#ddd" stroke-width="1.8" fill="none"/><path d="M828.5 510 A9.5 9.5 0 0 1 828.5 529Z" fill="#ddd"/><path d="M870 508 V532" stroke="#ddd" stroke-width="1.6"/><path d="M861 512 H868 V527 H861Z M872 512 H879 V527 H872Z" fill="#ccc"/><path d="M862 526 L867 520 V526Z M878 512 L873 518 V512Z" fill="#333"/><path d="M898 527 L904.5 511 L911 527 M900.5 521 H908.5" stroke="#ccc" stroke-width="1.8" fill="none"/><path d="M930 511 H936 Q941 511 941 515 Q941 519 936 519 H930 M930 519 H937 Q942 519 942 523 Q942 527 937 527 H930 V511" stroke="#ccc" stroke-width="1.8" fill="none"/><rect x="957" y="511" width="18" height="17" stroke="#555" stroke-width="1.4" fill="none"/><path d="M961 517 H971 M968 514 L971 517 M961 522 H971 M964 525 L961 522" stroke="#555" stroke-width="1.4" fill="none"/><rect x="991" y="510" width="11" height="11" fill="#555"/><rect x="997" y="516" width="12" height="12" stroke="#555" stroke-width="1.6" fill="#353535"/><rect x="1022" y="511" width="18" height="17" stroke="#555" stroke-width="1.4" fill="none"/><path d="M1027 513 V521 H1036 M1033 518 L1036 521 L1033 524" stroke="#555" stroke-width="1.4" fill="none"/></svg><div style="position:absolute;left:1733px;top:505px;width:29px;height:29px;background:#353535;border-radius:3px;"></div><svg style="left:1733px;top:505px" width="29" height="29"><circle cx="14.50" cy="8.30" r="3.6" fill="#c8c8c8"/><circle cx="19.87" cy="11.40" r="3.6" fill="#c8c8c8"/><circle cx="19.87" cy="17.60" r="3.6" fill="#c8c8c8"/><circle cx="14.50" cy="20.70" r="3.6" fill="#c8c8c8"/><circle cx="9.13" cy="17.60" r="3.6" fill="#c8c8c8"/><circle cx="9.13" cy="11.40" r="3.6" fill="#c8c8c8"/><circle cx="14.5" cy="14.5" r="6.5" fill="#c8c8c8"/><circle cx="14.50" cy="8.30" r="1.7" fill="#eee"/><circle cx="19.87" cy="11.40" r="1.7" fill="#333"/><circle cx="19.87" cy="17.60" r="1.7" fill="#333"/><circle cx="14.50" cy="20.70" r="1.7" fill="#333"/><circle cx="9.13" cy="17.60" r="1.7" fill="#333"/><circle cx="9.13" cy="11.40" r="1.7" fill="#333"/></svg><div style="position:absolute;left:624px;top:541px;width:1112px;height:608px;background:#000;"></div><svg style="left:0;top:0" width="2000" height="1149"><defs><linearGradient id="vg1" x1="0" y1="0" x2="0.4" y2="1"><stop offset="0" stop-color="#c4c4c4"/><stop offset="0.5" stop-color="#b9b9b9"/><stop offset="1" stop-color="#aeaeae"/></linearGradient><radialGradient id="vg2" cx="960" cy="800" r="260" gradientUnits="userSpaceOnUse"><stop offset="0" stop-color="#fff" stop-opacity="0.22"/><stop offset="1" stop-color="#fff" stop-opacity="0"/></radialGradient><radialGradient id="vg3" cx="1500" cy="1120" r="300" gradientUnits="userSpaceOnUse"><stop offset="0" stop-color="#000" stop-opacity="0.07"/><stop offset="1" stop-color="#000" stop-opacity="0"/></radialGradient><linearGradient id="vg4" x1="886" y1="0" x2="940" y2="0" gradientUnits="userSpaceOnUse"><stop offset="0" stop-color="#000" stop-opacity="0.14"/><stop offset="1" stop-color="#000" stop-opacity="0"/></linearGradient><radialGradient id="vg5" cx="1030" cy="975" r="140" gradientUnits="userSpaceOnUse" gradientTransform="translate(1030 975) scale(1 0.35) translate(-1030 -975)"><stop offset="0" stop-color="#000" stop-opacity="0.035"/><stop offset="1" stop-color="#000" stop-opacity="0"/></radialGradient><linearGradient id="vg6" x1="1600" y1="0" x2="1420" y2="0" gradientUnits="userSpaceOnUse"><stop offset="0" stop-color="#000" stop-opacity="0.1"/><stop offset="1" stop-color="#000" stop-opacity="0"/></linearGradient></defs><path d="M878.2 686.7 L918.9 726.8 C929.1 732.3 959.8 749.4 980.0 760.0 C1000.2 770.6 1020.0 783.8 1040.0 790.5 C1060.0 797.2 1081.9 798.2 1100.0 800.5 C1118.1 802.8 1132.0 804.1 1148.7 804.0 C1165.4 803.9 1183.1 801.4 1200.0 800.0 C1216.9 798.6 1226.7 797.1 1250.0 795.8 C1273.3 794.5 1308.5 793.0 1340.0 792.0 C1371.5 791.0 1422.4 790.2 1438.9 789.8 L1586.8 746 C1584.4 755.7 1577.1 785.7 1572.6 804.0 C1568.1 822.3 1564.3 840.0 1560.0 856.0 C1555.7 872.0 1551.2 882.7 1547.0 900.0 C1542.8 917.3 1539.3 938.2 1535.0 960.0 C1530.7 981.8 1526.5 999.5 1521.0 1031.0 C1515.5 1062.5 1505.2 1129.3 1502.0 1149.0 L923 1149 C921.3 1137.5 915.3 1098.2 913.0 1080.0 C910.7 1061.8 910.3 1052.8 909.0 1040.0 C907.7 1027.2 906.7 1016.3 905.0 1003.0 C903.3 989.7 901.0 977.2 899.0 960.0 C897.0 942.8 894.8 921.7 893.0 900.0 C891.2 878.3 889.1 850.5 888.0 830.0 C886.9 809.5 888.1 800.9 886.5 777.0 C884.9 753.1 879.6 701.8 878.2 686.7Z" fill="url(#vg1)"/><path d="M878.2 686.7 L918.9 726.8 C929.1 732.3 959.8 749.4 980.0 760.0 C1000.2 770.6 1020.0 783.8 1040.0 790.5 C1060.0 797.2 1081.9 798.2 1100.0 800.5 C1118.1 802.8 1132.0 804.1 1148.7 804.0 C1165.4 803.9 1183.1 801.4 1200.0 800.0 C1216.9 798.6 1226.7 797.1 1250.0 795.8 C1273.3 794.5 1308.5 793.0 1340.0 792.0 C1371.5 791.0 1422.4 790.2 1438.9 789.8 L1586.8 746 C1584.4 755.7 1577.1 785.7 1572.6 804.0 C1568.1 822.3 1564.3 840.0 1560.0 856.0 C1555.7 872.0 1551.2 882.7 1547.0 900.0 C1542.8 917.3 1539.3 938.2 1535.0 960.0 C1530.7 981.8 1526.5 999.5 1521.0 1031.0 C1515.5 1062.5 1505.2 1129.3 1502.0 1149.0 L923 1149 C921.3 1137.5 915.3 1098.2 913.0 1080.0 C910.7 1061.8 910.3 1052.8 909.0 1040.0 C907.7 1027.2 906.7 1016.3 905.0 1003.0 C903.3 989.7 901.0 977.2 899.0 960.0 C897.0 942.8 894.8 921.7 893.0 900.0 C891.2 878.3 889.1 850.5 888.0 830.0 C886.9 809.5 888.1 800.9 886.5 777.0 C884.9 753.1 879.6 701.8 878.2 686.7Z" fill="url(#vg2)"/><path d="M878.2 686.7 L918.9 726.8 C929.1 732.3 959.8 749.4 980.0 760.0 C1000.2 770.6 1020.0 783.8 1040.0 790.5 C1060.0 797.2 1081.9 798.2 1100.0 800.5 C1118.1 802.8 1132.0 804.1 1148.7 804.0 C1165.4 803.9 1183.1 801.4 1200.0 800.0 C1216.9 798.6 1226.7 797.1 1250.0 795.8 C1273.3 794.5 1308.5 793.0 1340.0 792.0 C1371.5 791.0 1422.4 790.2 1438.9 789.8 L1586.8 746 C1584.4 755.7 1577.1 785.7 1572.6 804.0 C1568.1 822.3 1564.3 840.0 1560.0 856.0 C1555.7 872.0 1551.2 882.7 1547.0 900.0 C1542.8 917.3 1539.3 938.2 1535.0 960.0 C1530.7 981.8 1526.5 999.5 1521.0 1031.0 C1515.5 1062.5 1505.2 1129.3 1502.0 1149.0 L923 1149 C921.3 1137.5 915.3 1098.2 913.0 1080.0 C910.7 1061.8 910.3 1052.8 909.0 1040.0 C907.7 1027.2 906.7 1016.3 905.0 1003.0 C903.3 989.7 901.0 977.2 899.0 960.0 C897.0 942.8 894.8 921.7 893.0 900.0 C891.2 878.3 889.1 850.5 888.0 830.0 C886.9 809.5 888.1 800.9 886.5 777.0 C884.9 753.1 879.6 701.8 878.2 686.7Z" fill="url(#vg3)"/><path d="M878.2 686.7 L918.9 726.8 C929.1 732.3 959.8 749.4 980.0 760.0 C1000.2 770.6 1020.0 783.8 1040.0 790.5 C1060.0 797.2 1081.9 798.2 1100.0 800.5 C1118.1 802.8 1132.0 804.1 1148.7 804.0 C1165.4 803.9 1183.1 801.4 1200.0 800.0 C1216.9 798.6 1226.7 797.1 1250.0 795.8 C1273.3 794.5 1308.5 793.0 1340.0 792.0 C1371.5 791.0 1422.4 790.2 1438.9 789.8 L1586.8 746 C1584.4 755.7 1577.1 785.7 1572.6 804.0 C1568.1 822.3 1564.3 840.0 1560.0 856.0 C1555.7 872.0 1551.2 882.7 1547.0 900.0 C1542.8 917.3 1539.3 938.2 1535.0 960.0 C1530.7 981.8 1526.5 999.5 1521.0 1031.0 C1515.5 1062.5 1505.2 1129.3 1502.0 1149.0 L923 1149 C921.3 1137.5 915.3 1098.2 913.0 1080.0 C910.7 1061.8 910.3 1052.8 909.0 1040.0 C907.7 1027.2 906.7 1016.3 905.0 1003.0 C903.3 989.7 901.0 977.2 899.0 960.0 C897.0 942.8 894.8 921.7 893.0 900.0 C891.2 878.3 889.1 850.5 888.0 830.0 C886.9 809.5 888.1 800.9 886.5 777.0 C884.9 753.1 879.6 701.8 878.2 686.7Z" fill="url(#vg4)"/><path d="M878.2 686.7 L918.9 726.8 C929.1 732.3 959.8 749.4 980.0 760.0 C1000.2 770.6 1020.0 783.8 1040.0 790.5 C1060.0 797.2 1081.9 798.2 1100.0 800.5 C1118.1 802.8 1132.0 804.1 1148.7 804.0 C1165.4 803.9 1183.1 801.4 1200.0 800.0 C1216.9 798.6 1226.7 797.1 1250.0 795.8 C1273.3 794.5 1308.5 793.0 1340.0 792.0 C1371.5 791.0 1422.4 790.2 1438.9 789.8 L1586.8 746 C1584.4 755.7 1577.1 785.7 1572.6 804.0 C1568.1 822.3 1564.3 840.0 1560.0 856.0 C1555.7 872.0 1551.2 882.7 1547.0 900.0 C1542.8 917.3 1539.3 938.2 1535.0 960.0 C1530.7 981.8 1526.5 999.5 1521.0 1031.0 C1515.5 1062.5 1505.2 1129.3 1502.0 1149.0 L923 1149 C921.3 1137.5 915.3 1098.2 913.0 1080.0 C910.7 1061.8 910.3 1052.8 909.0 1040.0 C907.7 1027.2 906.7 1016.3 905.0 1003.0 C903.3 989.7 901.0 977.2 899.0 960.0 C897.0 942.8 894.8 921.7 893.0 900.0 C891.2 878.3 889.1 850.5 888.0 830.0 C886.9 809.5 888.1 800.9 886.5 777.0 C884.9 753.1 879.6 701.8 878.2 686.7Z" fill="url(#vg5)"/><path d="M878.2 686.7 L918.9 726.8 C929.1 732.3 959.8 749.4 980.0 760.0 C1000.2 770.6 1020.0 783.8 1040.0 790.5 C1060.0 797.2 1081.9 798.2 1100.0 800.5 C1118.1 802.8 1132.0 804.1 1148.7 804.0 C1165.4 803.9 1183.1 801.4 1200.0 800.0 C1216.9 798.6 1226.7 797.1 1250.0 795.8 C1273.3 794.5 1308.5 793.0 1340.0 792.0 C1371.5 791.0 1422.4 790.2 1438.9 789.8 L1586.8 746 C1584.4 755.7 1577.1 785.7 1572.6 804.0 C1568.1 822.3 1564.3 840.0 1560.0 856.0 C1555.7 872.0 1551.2 882.7 1547.0 900.0 C1542.8 917.3 1539.3 938.2 1535.0 960.0 C1530.7 981.8 1526.5 999.5 1521.0 1031.0 C1515.5 1062.5 1505.2 1129.3 1502.0 1149.0 L923 1149 C921.3 1137.5 915.3 1098.2 913.0 1080.0 C910.7 1061.8 910.3 1052.8 909.0 1040.0 C907.7 1027.2 906.7 1016.3 905.0 1003.0 C903.3 989.7 901.0 977.2 899.0 960.0 C897.0 942.8 894.8 921.7 893.0 900.0 C891.2 878.3 889.1 850.5 888.0 830.0 C886.9 809.5 888.1 800.9 886.5 777.0 C884.9 753.1 879.6 701.8 878.2 686.7Z" fill="url(#vg6)"/></svg></body></html>
